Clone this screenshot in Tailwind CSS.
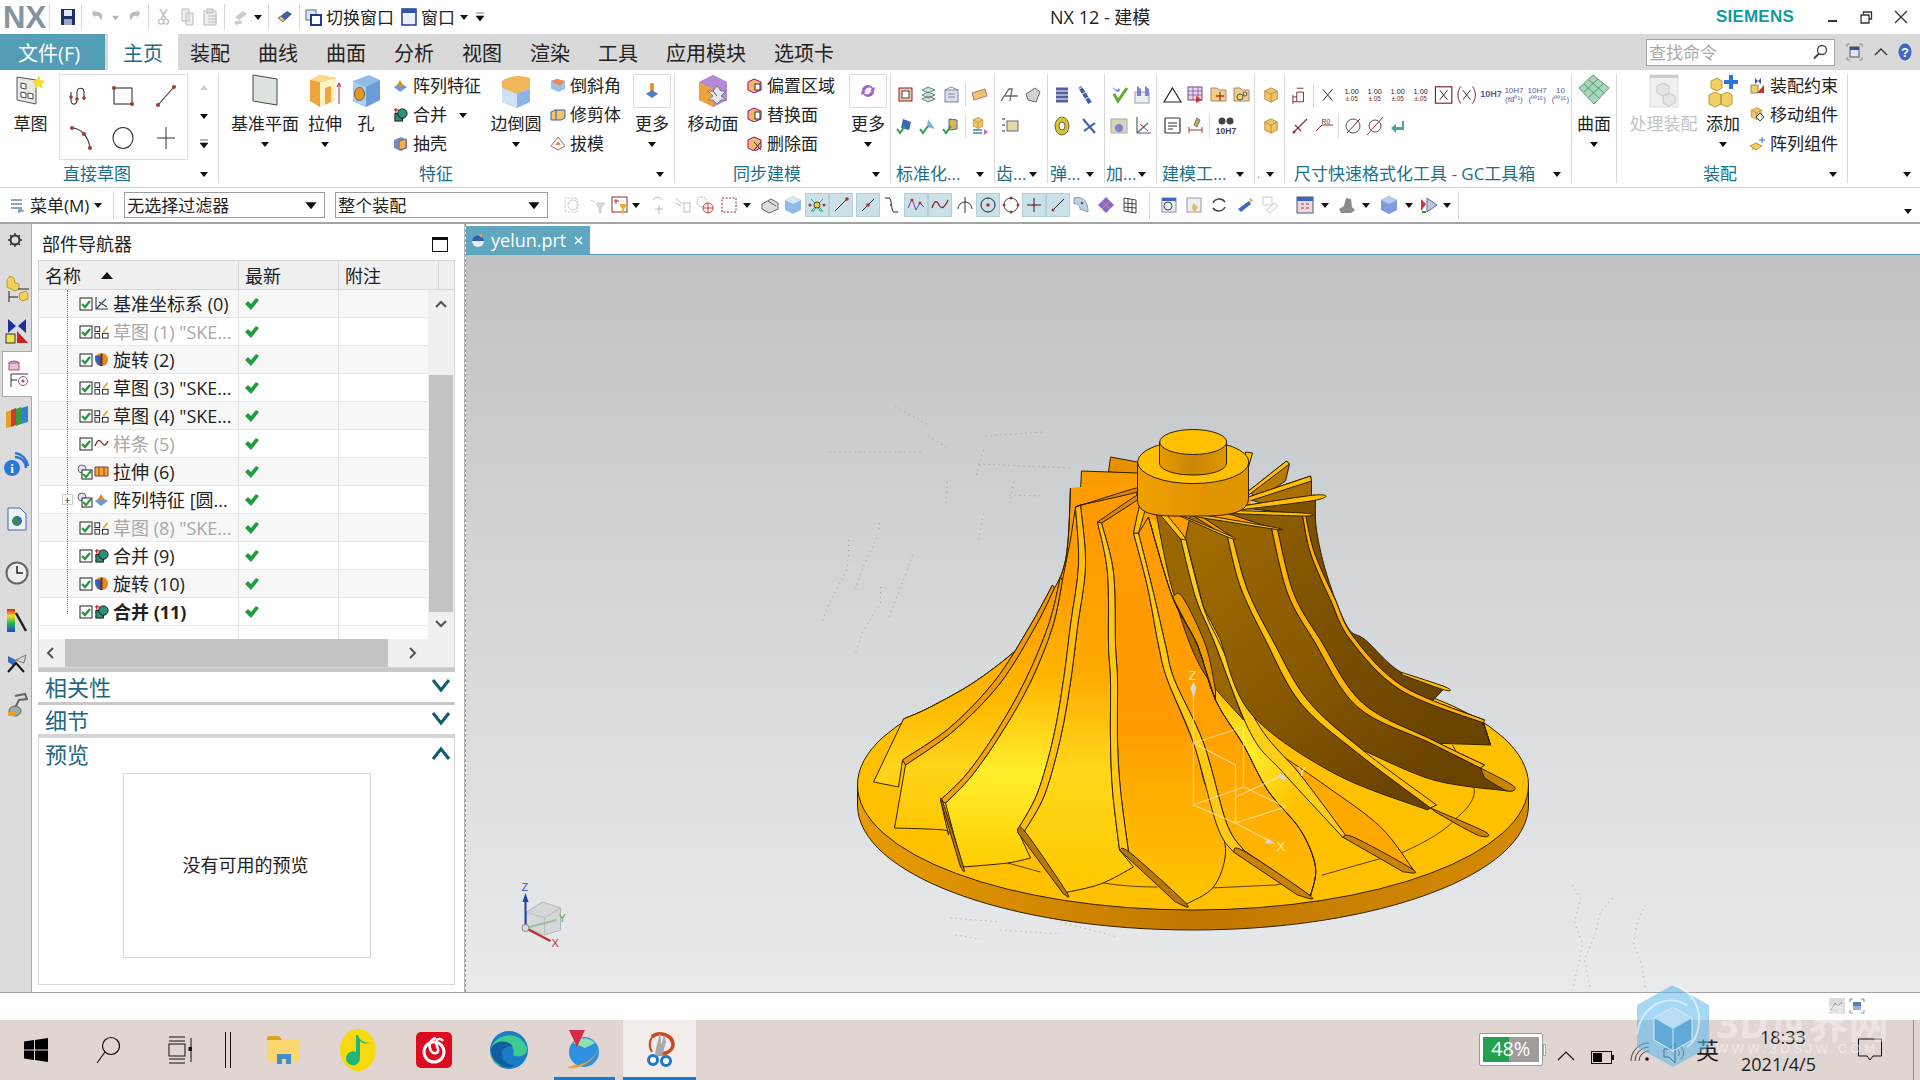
<!DOCTYPE html>
<html lang="zh">
<head>
<meta charset="UTF-8">
<title>NX 12 - 建模</title>
<script src="https://cdn.jsdelivr.net/npm/@tailwindcss/browser@4"></script>
</head>
<body class="bg-white">
<svg class="hidden" width="0" height="0">
  <symbol id="tri" viewBox="0 0 10 10"><path d="M1 3h8L5 8z" fill="#111"/></symbol>
  <symbol id="chk" viewBox="0 0 14 14"><path d="M0 7l3-3 3 3 5-6 3 2-8 10z" fill="#1f9d3a"/></symbol>
  <symbol id="box" viewBox="0 0 14 14"><rect x="1" y="1" width="12" height="12" fill="#fff" stroke="#222"/><path d="M3 7l3 3 5-6" fill="none" stroke="#1f9d3a" stroke-width="2.400"/></symbol>
  <symbol id="boxi" viewBox="0 0 16 16"><circle cx="5" cy="5" r="4" fill="#dfe6f2" stroke="#667"/><rect x="5" y="6" width="10" height="9" fill="#fff" stroke="#222"/><path d="M6 10l3 3 5-6" fill="none" stroke="#1f9d3a" stroke-width="2"/></symbol>
  <symbol id="sk" viewBox="0 0 16 16"><rect x="1" y="3" width="5" height="5" fill="#fff" stroke="#222"/><rect x="1" y="10" width="5" height="5" fill="#fff" stroke="#222"/><rect x="9" y="10" width="6" height="5" fill="#fff" stroke="#222"/><path d="M9 8l5-6 1 2-4 5z" fill="#e8b030"/></symbol>
  <symbol id="rev" viewBox="0 0 16 16"><circle cx="8" cy="8" r="7" fill="#e98a15"/><path d="M1 4h7v11C4 15 1 10 1 4z" fill="#2d63b8"/><path d="M8 2v13" stroke="#7a1e1e" stroke-width="2"/></symbol>
  <symbol id="uni" viewBox="0 0 16 16"><path d="M3 1v5M1 3h5" stroke="#c22" stroke-width="1.300"/><rect x="2" y="7" width="8" height="8" fill="#2f8f7d" stroke="#111"/><circle cx="10" cy="7" r="5" fill="#2f8f7d" stroke="#111"/></symbol>
  <symbol id="cube" viewBox="0 0 20 20"><path d="M10 2l7 3.500v9L10 18l-7-3.500v-9z" fill="#eec46a" stroke="#b08020" stroke-width=".8"/><path d="M10 9v9M3 5.500l7 3.500 7-3.500" fill="none" stroke="#b08020" stroke-width=".8"/></symbol>
  <symbol id="dim" viewBox="0 0 24 20"><text x="12" y="9" font-size="9" text-anchor="middle" fill="#222" font-family="Liberation Sans">1.00</text><text x="12" y="17" font-size="8" text-anchor="middle" fill="#7a1f2a" font-family="Liberation Sans">±.05</text></symbol>
</svg>

<div class="relative w-[1920px] h-[1080px] overflow-hidden flex flex-col text-[#222] font-['Open_Sans','Noto_Sans_CJK_SC',sans-serif]">

  <!-- title bar -->
  <div class="h-[34px] flex items-center bg-white shrink-0">
    <div class="w-[1050px] flex items-center h-full">
      <span class="ml-[3px] w-[42px] text-[31px] font-bold leading-none text-[#84959f] font-['Liberation_Sans',sans-serif]">NX</span>
      <div class="ml-[4px] w-px h-[26px] bg-[#d8d8d8]"></div>
      <svg class="ml-[10px] w-[16px] h-[18px]" viewBox="0 0 16 18"><rect x="1" y="1" width="14" height="16" fill="#1c2f6a"/><rect x="4" y="2" width="8" height="6" fill="#dfe7f4"/><rect x="4" y="11" width="8" height="6" fill="#9aa8c8"/></svg>
      <div class="ml-[5px] w-px h-[26px] bg-[#d8d8d8]"></div>
      <svg class="ml-[8px] w-[14px] h-[16px]" viewBox="0 0 14 16"><path d="M2 4l3-3v2c6-1 9 3 6 9-.5-4-3-6-6-5v2z" fill="#bbb"/></svg>
      <svg class="ml-[7px] w-[9px] h-[9px] opacity-30"><use href="#tri"/></svg>
      <svg class="ml-[8px] w-[14px] h-[16px]" viewBox="0 0 14 16"><path d="M12 4L9 1v2C3 2 0 6 3 12c.5-4 3-6 6-5v2z" fill="#bbb"/></svg>
      <div class="ml-[6px] w-px h-[26px] bg-[#d8d8d8]"></div>
      <svg class="ml-[7px] w-[15px] h-[18px]" viewBox="0 0 15 18"><path d="M11 1L5 11M4 1l6 10M5 11a2.500 2.500 0 1 0 .1 0M10 11a2.500 2.500 0 1 0 .1 0" fill="none" stroke="#c4c4c4" stroke-width="1.500"/></svg>
      <svg class="ml-[9px] w-[15px] h-[18px]" viewBox="0 0 15 18"><path d="M2 1h7v12H2zM6 5h7v12H6z" fill="#eee" stroke="#bbb"/></svg>
      <svg class="ml-[8px] w-[16px] h-[18px]" viewBox="0 0 16 18"><rect x="1" y="3" width="12" height="14" fill="#eee" stroke="#bbb"/><rect x="4" y="1" width="6" height="4" fill="#ddd" stroke="#bbb"/><path d="M5 8h9M5 11h9M5 14h9" stroke="#bbb"/></svg>
      <div class="ml-[5px] w-px h-[26px] bg-[#d8d8d8]"></div>
      <svg class="ml-[8px] w-[15px] h-[18px]" viewBox="0 0 15 18"><path d="M2 9l8-6 4 3-8 6zM1 14l6-2 3 3-7 2z" fill="#ccc"/></svg>
      <svg class="ml-[5px] w-[10px] h-[10px]"><use href="#tri"/></svg>
      <div class="ml-[5px] w-px h-[26px] bg-[#d8d8d8]"></div>
      <svg class="ml-[8px] w-[17px] h-[16px]" viewBox="0 0 17 16"><path d="M1 9l9-7 5 3-9 8z" fill="#3b5fa8"/><path d="M1 9l5 4 2-2-4-4z" fill="#e8c66a" stroke="#555" stroke-width=".6"/></svg>
      <div class="ml-[5px] w-px h-[26px] bg-[#d8d8d8]"></div>
      <svg class="ml-[5px] w-[17px] h-[17px]" viewBox="0 0 17 17"><rect x="1" y="1" width="10" height="10" fill="#dce6f5" stroke="#667"/><rect x="6" y="6" width="10" height="10" fill="#fff" stroke="#1d3c8f" stroke-width="2"/></svg>
      <span class="ml-[4px] text-[17px] leading-none">切换窗口</span>
      <svg class="ml-[7px] w-[16px] h-[18px]" viewBox="0 0 16 18"><rect x="1" y="1" width="14" height="16" fill="#eaf0fb" stroke="#1d3c8f" stroke-width="1.500"/><rect x="1" y="1" width="14" height="4" fill="#2d56b3"/></svg>
      <span class="ml-[4px] text-[17px] leading-none">窗口</span>
      <svg class="ml-[4px] w-[10px] h-[10px]"><use href="#tri"/></svg>
      <svg class="ml-[6px] w-[10px] h-[10px]" viewBox="0 0 10 10"><path d="M1 1h8M1 4h8L5 9z" fill="#111" stroke="#111" stroke-width=".6"/></svg>
    </div>
    <span class="w-[666px] text-[18px] leading-none">NX 12 - 建模</span>
    <span class="w-[111px] text-[17px] font-bold tracking-[.2px] text-[#0f9a9e] font-['Liberation_Sans',sans-serif]">SIEMENS</span>
    <svg class="w-[12px] h-[12px]" viewBox="0 0 12 12"><path d="M1 10h9" stroke="#333" stroke-width="2"/></svg>
    <svg class="ml-[21px] w-[13px] h-[13px]" viewBox="0 0 13 13"><path d="M3.500 3V1h8v7H9.500M1 4h8v8H1z" fill="none" stroke="#333" stroke-width="1.300"/></svg>
    <svg class="ml-[21px] w-[14px] h-[14px]" viewBox="0 0 14 14"><path d="M1 1l12 12M13 1L1 13" stroke="#333" stroke-width="1.300"/></svg>
  </div>

  <!-- ribbon tabs -->
  <div class="h-[36px] flex items-center bg-[#d9d9d9] shrink-0 text-[20px] leading-none">
    <div class="w-[105px] h-full bg-[#549db6] text-white flex items-center pl-[18px] pt-[3px]">文件(F)</div>
    <div class="ml-[3px] w-[70px] h-full bg-white text-[#1b6c87] flex items-center justify-center pt-[3px]">主页</div>
    <div class="ml-[12px] mt-[3px] flex gap-[28px]">
      <span>装配</span><span>曲线</span><span>曲面</span><span>分析</span><span>视图</span><span>渲染</span><span>工具</span><span>应用模块</span><span>选项卡</span>
    </div>
    <div class="ml-auto w-[189px] h-[27px] bg-white border border-[#a5a5a5] flex items-center justify-between pl-[2px] pr-[6px] text-[17px] text-[#a8a8a8]">
      <span>查找命令</span>
      <svg class="w-[16px] h-[16px]" viewBox="0 0 16 16"><circle cx="10" cy="6" r="4.500" fill="#fff" stroke="#444" stroke-width="1.300"/><path d="M7 9.500l-5 5" stroke="#444" stroke-width="2"/></svg>
    </div>
    <svg class="ml-[11px] w-[17px] h-[18px]" viewBox="0 0 17 18"><path d="M1 4V1h3M13 1h3v3M16 14v3h-3M4 17H1v-3" fill="none" stroke="#888"/><rect x="4" y="4" width="9" height="10" fill="#dfe6f2" stroke="#555"/><rect x="4" y="4" width="9" height="3" fill="#2d4f9c"/></svg>
    <svg class="ml-[11px] w-[14px] h-[12px]" viewBox="0 0 14 12"><path d="M1 9l6-6 6 6" fill="none" stroke="#333" stroke-width="1.300"/></svg>
    <svg class="ml-[10px] w-[14px] h-[18px] mr-[8px]" viewBox="0 0 14 18"><ellipse cx="7" cy="9" rx="6.500" ry="8.500" fill="#3f68c4"/><text x="7" y="14" text-anchor="middle" font-size="13" font-weight="700" fill="#fff" font-family="Liberation Sans">?</text></svg>
  </div>

  <!-- ribbon -->
  <div class="h-[118px] py-[4px] flex bg-white shrink-0 text-[17px] leading-none border-b border-[#d4d4d4]">

    <!-- 直接草图 -->
    <div class="w-[219px] border-r border-[#d8d8d8] flex flex-col">
      <div class="h-[86px] flex">
        <div class="w-[59px] flex flex-col items-center pl-[2px]">
          <svg class="w-[32px] h-[32px]" viewBox="0 0 32 32"><path d="M2 3l19 3v24L2 26z" fill="#e8eadf" stroke="#556"/><path d="M6 9l5 1v5l-5-1zM6 18l5 1v5l-5-1zM13 19l5 1v5l-5-1z" fill="#fff" stroke="#445"/><path d="M24 1l1.500 5 5 1-4 3 1 5-4-3-4 3 1-5-4-3 5-1z" fill="#f2e02d"/></svg>
          <span class="mt-[9px]">草图</span>
        </div>
        <div class="w-[129px] h-[86px] border border-[#e0e0e0] grid grid-cols-3 grid-rows-2 place-items-center">
          <svg class="w-[24px] h-[24px]" viewBox="0 0 24 24"><path d="M2 8v8c0 6 6 5 6 0V8c0-5 7-5 7 0v8" fill="none" stroke="#333" stroke-width="1.100"/><circle cx="2" cy="13" r="1.800" fill="#a33"/><circle cx="8" cy="15" r="1.800" fill="#a33"/><circle cx="15" cy="14" r="1.800" fill="#a33"/></svg>
          <svg class="w-[24px] h-[22px]" viewBox="0 0 24 22"><rect x="3" y="3" width="18" height="16" fill="none" stroke="#333" stroke-width="1.100"/><circle cx="3" cy="3" r="2" fill="#a33"/><circle cx="21" cy="19" r="2" fill="#a33"/></svg>
          <svg class="w-[22px] h-[24px]" viewBox="0 0 22 24"><path d="M3 21L19 3" stroke="#333" stroke-width="1.100"/><circle cx="3" cy="21" r="2" fill="#a33"/><circle cx="19" cy="3" r="2" fill="#a33"/></svg>
          <svg class="w-[24px] h-[26px]" viewBox="0 0 24 26"><path d="M3 3c8 0 17 8 18 21" fill="none" stroke="#333" stroke-width="1.100"/><circle cx="3" cy="3" r="2" fill="#a33"/><circle cx="15" cy="9" r="2" fill="#a33"/><circle cx="21" cy="23" r="2" fill="#a33"/></svg>
          <svg class="w-[24px] h-[26px]" viewBox="0 0 24 26"><ellipse cx="12" cy="13" rx="10" ry="10.500" fill="none" stroke="#333" stroke-width="1.100"/></svg>
          <svg class="w-[20px] h-[24px]" viewBox="0 0 20 24"><path d="M10 1v22M1 12h18" stroke="#333" stroke-width="1"/></svg>
        </div>
        <div class="w-[28px] flex flex-col items-center gap-[18px] pt-[9px] pl-[3px]">
          <svg class="w-[10px] h-[10px] rotate-180 opacity-20"><use href="#tri"/></svg>
          <svg class="w-[10px] h-[10px]"><use href="#tri"/></svg>
          <svg class="w-[10px] h-[10px]" viewBox="0 0 10 10"><path d="M1 1h8M1 4h8L5 9z" fill="#111" stroke="#111" stroke-width=".6"/></svg>
        </div>
      </div>
      <div class="mt-[4px] h-[19px] flex items-center justify-between pl-[63px] pr-[9px]"><span class="text-[#1c6f89]">直接草图</span><svg class="w-[10px] h-[10px]"><use href="#tri"/></svg></div>
    </div>

    <!-- 特征 -->
    <div class="w-[456px] border-r border-[#d8d8d8] flex flex-col">
      <div class="h-[86px] flex">
        <div class="ml-[12px] w-[68px] flex flex-col items-center">
          <svg class="w-[26px] h-[32px]" viewBox="0 0 26 32"><path d="M1 1l24 4v26L1 27z" fill="#dbe3dc" stroke="#445"/></svg>
          <span class="mt-[9px]">基准平面</span><svg class="mt-[7px] w-[10px] h-[10px]"><use href="#tri"/></svg>
        </div>
        <div class="ml-[8px] w-[36px] flex flex-col items-center">
          <svg class="w-[32px] h-[34px]" viewBox="0 0 32 34"><path d="M1 6l10-5 16 3v22l-16 7-10-6z" fill="#eda53c"/><path d="M11 8l16-4v22l-5 2V12l-6 2v17l-5 2z" fill="#fff2c6"/><path d="M1 6l10-5 16 3-16 4z" fill="#ffd98a"/><path d="M30 30V10M28 13l2-4 2 4" stroke="#b23" fill="none"/></svg>
          <span class="mt-[7px]">拉伸</span><svg class="mt-[7px] w-[10px] h-[10px]"><use href="#tri"/></svg>
        </div>
        <div class="ml-[11px] w-[24px] flex flex-col items-center">
          <svg class="w-[30px] h-[34px] shrink-0" viewBox="0 0 30 34"><path d="M2 7l16-6 11 5v20l-14 7-13-6z" fill="#8fbbe8"/><path d="M2 7l13 6 14-7v20l-14 7-13-6z" fill="#6d9bd8"/><path d="M2 7l13 6v20L2 27z" fill="#aacdf0"/><ellipse cx="8.500" cy="20" rx="5" ry="6.500" fill="#e7961a" stroke="#664"/></svg>
          <span class="mt-[7px]">孔</span>
        </div>
        <div class="ml-[15px] w-[92px] -mt-[3px]">
          <div class="h-[29px] flex items-center gap-[5px]"><svg class="w-[15px] h-[15px]" viewBox="0 0 15 15"><path d="M1 9l6-4 7 4-7 5z" fill="#6d9bd8"/><path d="M4 7l3-5 3 5-3 2z" fill="#e98a15"/></svg>阵列特征</div>
          <div class="h-[29px] flex items-center gap-[5px]"><svg class="w-[15px] h-[15px]"><use href="#uni"/></svg>合并<svg class="ml-[6px] w-[10px] h-[10px]"><use href="#tri"/></svg></div>
          <div class="h-[29px] flex items-center gap-[5px]"><svg class="w-[15px] h-[15px]" viewBox="0 0 15 15"><path d="M1 4l7-3 6 3v8l-6 3-7-3z" fill="#6d8fc8"/><path d="M6 5l7-2v9l-7 2z" fill="#f0b04a" stroke="#955"/></svg>抽壳</div>
        </div>
        <div class="ml-[5px] w-[52px] flex flex-col items-center">
          <svg class="w-[32px] h-[34px]" viewBox="0 0 32 34"><path d="M2 7c8-6 20-6 28-3v10L17 20 2 14z" fill="#f2b65a"/><path d="M2 14l15 6 13-6v14l-13 6-15-6z" fill="#8ab3e6"/><path d="M2 14l15 6v14L2 28z" fill="#cfe1f6"/></svg>
          <span class="mt-[7px]">边倒圆</span><svg class="mt-[7px] w-[10px] h-[10px]"><use href="#tri"/></svg>
        </div>
        <div class="ml-[8px] w-[75px] -mt-[3px]">
          <div class="h-[29px] flex items-center gap-[4px]"><svg class="w-[16px] h-[15px]" viewBox="0 0 16 15"><path d="M1 3l6-2 8 2v8l-6 3-8-3z" fill="#9cc0ec"/><path d="M1 3l6-2 8 2-5 5z" fill="#e98a5a"/></svg>倒斜角</div>
          <div class="h-[29px] flex items-center gap-[4px]"><svg class="w-[16px] h-[15px]" viewBox="0 0 16 15"><path d="M1 5l4-2h10v8l-4 2H1z" fill="#f0c36c" stroke="#3a5fa8"/><path d="M6 3v10" stroke="#3a5fa8"/></svg>修剪体</div>
          <div class="h-[29px] flex items-center gap-[4px]"><svg class="w-[16px] h-[15px]" viewBox="0 0 16 15"><path d="M8 1l7 9-7 4-7-4z" fill="#fff" stroke="#a66"/><path d="M8 5l3 4H5z" fill="#e98a5a"/></svg>拔模</div>
        </div>
        <div class="ml-[8px] w-[38px] flex flex-col items-center">
          <div class="w-[38px] h-[34px] border border-[#dcdcdc] rounded-[2px] flex items-center justify-center"><svg class="w-[14px] h-[18px]" viewBox="0 0 16 20"><rect x="6" y="1" width="4" height="9" fill="#e98a15"/><path d="M1 13l7-4 7 4-7 5z" fill="#4f7fc0"/></svg></div>
          <span class="mt-[7px]">更多</span><svg class="mt-[7px] w-[10px] h-[10px]"><use href="#tri"/></svg>
        </div>
      </div>
      <div class="mt-[4px] h-[19px] flex items-center justify-between pr-[9px]"><span class="ml-[200px] text-[#1c6f89]">特征</span><svg class="w-[10px] h-[10px]"><use href="#tri"/></svg></div>
    </div>

    <!-- 同步建模 -->
    <div class="w-[216px] border-r border-[#d8d8d8] flex flex-col">
      <div class="h-[86px] flex">
        <div class="ml-[13px] w-[50px] flex flex-col items-center">
          <svg class="w-[32px] h-[34px]" viewBox="0 0 32 34"><path d="M16 1l14 7v18l-14 7-14-7V8z" fill="#e9a33a"/><path d="M2 8l14-7 14 7-14 7z" fill="#b488d8"/><path d="M30 8v18l-14 7V15z" fill="#b488d8"/><path d="M20 22l-4-5 4-5 4 5h5l-5 5 5 4h-5l-4 4-4-4h-5l5-4-5-5h5z" fill="#e4e8ec" stroke="#667" stroke-width=".8"/></svg>
          <span class="mt-[7px] whitespace-nowrap">移动面</span>
        </div>
        <div class="ml-[9px] w-[90px] -mt-[3px]">
          <div class="h-[29px] flex items-center gap-[5px]"><svg class="w-[15px] h-[15px]" viewBox="0 0 15 15"><path d="M1 4l6-3 7 3v8l-7 3-6-3z" fill="#edbb6a" stroke="#a08"/><rect x="8" y="6" width="5" height="6" fill="#fff" stroke="#333"/></svg>偏置区域</div>
          <div class="h-[29px] flex items-center gap-[5px]"><svg class="w-[15px] h-[15px]" viewBox="0 0 15 15"><path d="M1 4l6-3 7 3v8l-7 3-6-3z" fill="#edbb6a" stroke="#a08"/><rect x="8" y="5" width="5" height="7" fill="#fff" stroke="#333"/></svg>替换面</div>
          <div class="h-[29px] flex items-center gap-[5px]"><svg class="w-[15px] h-[15px]" viewBox="0 0 15 15"><path d="M1 4l6-3 7 3v8l-7 3-6-3z" fill="#edbb6a" stroke="#a08"/><path d="M7 6l7 8M14 6l-7 8" stroke="#333"/></svg>删除面</div>
        </div>
        <div class="ml-[12px] w-[38px] flex flex-col items-center">
          <div class="w-[38px] h-[34px] border border-[#dcdcdc] rounded-[2px] flex items-center justify-center"><svg class="w-[16px] h-[16px]" viewBox="0 0 16 16"><path d="M2 7a6 6 0 0 1 11-2l2-1-1 5-4-2 2-1a4 4 0 0 0-7 2zM14 9a6 6 0 0 1-11 2l-2 1 1-5 4 2-2 1a4 4 0 0 0 7-2z" fill="#a560c8"/></svg></div>
          <span class="mt-[7px]">更多</span><svg class="mt-[7px] w-[10px] h-[10px]"><use href="#tri"/></svg>
        </div>
      </div>
      <div class="mt-[4px] h-[19px] flex items-center justify-between pr-[9px]"><span class="ml-[58px] text-[#1c6f89]">同步建模</span><svg class="w-[10px] h-[10px]"><use href="#tri"/></svg></div>
    </div>

    <!-- 标准化 -->
    <div class="w-[104px] border-r border-[#d8d8d8] flex flex-col">
      <div class="h-[86px] pt-[5px] pl-[5px]">
        <div class="h-[31px] flex items-center gap-[4px]">
          <svg class="w-[19px] h-[19px]" viewBox="0 0 19 19"><rect x="3" y="3" width="13" height="13" fill="#f0c7b0" stroke="#822"/><rect x="6" y="6" width="7" height="7" fill="#fff" stroke="#444"/></svg>
          <svg class="w-[19px] h-[19px]" viewBox="0 0 19 19"><path d="M3 5l6-3 7 3-7 3zM3 10l6-3 7 3-7 3zM3 14l6-3 7 3-7 3z" fill="#cdd" stroke="#687"/></svg>
          <svg class="w-[19px] h-[19px]" viewBox="0 0 19 19"><rect x="3" y="5" width="13" height="12" fill="#dde" stroke="#789"/><path d="M3 5l6-3 7 3M6 9h7M6 12h7" stroke="#789" fill="none"/></svg>
          <div class="w-px h-[24px] bg-[#d8d8d8]"></div>
          <svg class="ml-[1px] w-[17px] h-[17px]" viewBox="0 0 17 17"><path d="M1 7l13-4 2 7-13 4z" fill="#eec56a" stroke="#a78"/></svg>
        </div>
        <div class="h-[31px] flex items-center gap-[4px]">
          <svg class="w-[19px] h-[19px]" viewBox="0 0 19 19"><path d="M7 3l8 3-2 8-8-2z" fill="#3c67c0"/><path d="M1 13l3 4 5-7" fill="none" stroke="#2aa050" stroke-width="2"/></svg>
          <svg class="w-[19px] h-[19px]" viewBox="0 0 19 19"><path d="M9 3l7 10-8-2z" fill="#7fb0d8"/><path d="M1 13l3 4 5-7" fill="none" stroke="#2aa050" stroke-width="2"/></svg>
          <svg class="w-[19px] h-[19px]" viewBox="0 0 19 19"><path d="M7 3l8 1v9l-8 1z" fill="#e4b64a" stroke="#3c67c0"/><path d="M1 13l3 4 5-7" fill="none" stroke="#2aa050" stroke-width="2"/></svg>
          <div class="w-px h-[24px] bg-[#d8d8d8]"></div>
          <svg class="ml-[1px] w-[17px] h-[19px]" viewBox="0 0 17 19"><use href="#cube" width="14" height="14"/><path d="M2 14h9M2 17h9" stroke="#48a" stroke-width="1.500"/><path d="M13 13l4 3-4 3z" fill="#b36fd0"/></svg>
        </div>
      </div>
      <div class="mt-[4px] h-[19px] flex items-center justify-between pl-[5px] pr-[9px]"><span class="text-[#1c6f89]">标准化...</span><svg class="w-[10px] h-[10px]"><use href="#tri"/></svg></div>
    </div>

    <!-- 齿 -->
    <div class="w-[53px] border-r border-[#d8d8d8] flex flex-col">
      <div class="h-[86px] pt-[5px] pl-[5px]">
        <div class="h-[31px] flex items-center gap-[4px]">
          <svg class="w-[19px] h-[16px]" viewBox="0 0 19 16"><path d="M1 14L9 2h3l-2 12M5 9h13" fill="none" stroke="#667" stroke-width="1.300"/></svg>
          <svg class="w-[19px] h-[18px]" viewBox="0 0 19 18"><path d="M3 8l9-6 5 4-4 10-8-2z" fill="#cfd4cc" stroke="#667"/></svg>
        </div>
        <div class="h-[31px] flex items-center"><svg class="ml-[1px] w-[19px] h-[17px]" viewBox="0 0 19 17"><path d="M1 2h3M1 8h3M1 14h3" stroke="#222"/><rect x="6" y="4" width="11" height="10" fill="#e8d8a8" stroke="#667"/></svg></div>
      </div>
      <div class="mt-[4px] h-[19px] flex items-center justify-between pl-[1px] pr-[9px]"><span class="text-[#1c6f89]">齿...</span><svg class="w-[10px] h-[10px]"><use href="#tri"/></svg></div>
    </div>

    <!-- 弹 -->
    <div class="w-[57px] border-r border-[#d8d8d8] flex flex-col">
      <div class="h-[86px] pt-[5px] pl-[5px]">
        <div class="h-[31px] flex items-center gap-[6px]">
          <svg class="w-[18px] h-[18px]" viewBox="0 0 18 18"><path d="M3 3h12M3 7h12M3 11h12M3 15h12" stroke="#51609a" stroke-width="3"/></svg>
          <svg class="w-[16px] h-[20px]" viewBox="0 0 16 20"><path d="M3 2l10 16" stroke="#3a5fb0" stroke-width="4"/><path d="M2 4l4-2M5 9l4-2M8 14l4-2" stroke="#e8eef8"/></svg>
        </div>
        <div class="h-[31px] flex items-center gap-[10px]">
          <svg class="w-[18px] h-[20px]" viewBox="0 0 18 20"><ellipse cx="9" cy="10" rx="7" ry="9" fill="#d9c22f" stroke="#665"/><ellipse cx="9" cy="10" rx="3" ry="4" fill="#fff" stroke="#665"/></svg>
          <svg class="w-[16px] h-[18px]" viewBox="0 0 16 18"><path d="M2 2l12 14M14 6L3 14" stroke="#3a5fb0" stroke-width="2"/></svg>
        </div>
      </div>
      <div class="mt-[4px] h-[19px] flex items-center justify-between pl-[2px] pr-[9px]"><span class="text-[#1c6f89]">弹...</span><svg class="w-[10px] h-[10px]"><use href="#tri"/></svg></div>
    </div>

    <!-- 加 -->
    <div class="w-[52px] border-r border-[#d8d8d8] flex flex-col">
      <div class="h-[86px] pt-[5px] pl-[5px]">
        <div class="h-[31px] flex items-center gap-[4px]">
          <svg class="w-[19px] h-[19px]" viewBox="0 0 19 19"><path d="M2 2l5 3 2-2 1 3-3 1z" fill="#7a86c8"/><path d="M4 9l4 7 9-13" fill="none" stroke="#5ab02c" stroke-width="3"/></svg>
          <svg class="w-[19px] h-[19px]" viewBox="0 0 19 19"><rect x="2" y="7" width="14" height="11" fill="#e8eef2" stroke="#99a"/><path d="M4 1l4 3v7H4zM12 1l4 3v7h-4z" fill="#7a86c8"/></svg>
        </div>
        <div class="h-[31px] flex items-center gap-[4px]">
          <svg class="w-[19px] h-[19px]" viewBox="0 0 19 19"><rect x="1" y="3" width="16" height="14" fill="#d9d4bc" stroke="#aaa"/><circle cx="9" cy="12" r="4" fill="#7a86c8"/></svg>
          <svg class="w-[19px] h-[19px]" viewBox="0 0 19 19"><path d="M4 1v16h14M4 17L15 7" fill="none" stroke="#567" stroke-width="1.200"/><path d="M7 8l8 7" stroke="#a33"/></svg>
        </div>
      </div>
      <div class="mt-[4px] h-[19px] flex items-center justify-between pl-[1px] pr-[9px]"><span class="text-[#1c6f89]">加...</span><svg class="w-[10px] h-[10px]"><use href="#tri"/></svg></div>
    </div>

    <!-- 建模工具 -->
    <div class="w-[98px] border-r border-[#d8d8d8] flex flex-col">
      <div class="h-[86px] pt-[5px] pl-[6px]">
        <div class="h-[31px] flex items-center gap-[4px]">
          <svg class="w-[19px] h-[18px]" viewBox="0 0 19 18"><path d="M9.500 2L18 16H1z" fill="none" stroke="#222" stroke-width="1.200"/></svg>
          <svg class="w-[19px] h-[19px]" viewBox="0 0 19 19"><rect x="2" y="2" width="14" height="13" fill="#ecd4e0" stroke="#6b4a9c"/><path d="M2 6h14M2 10h14M7 2v13M12 2v13" stroke="#6b4a9c" stroke-width=".7"/><path d="M10 11l6 4-6 3z" fill="#c33"/></svg>
          <svg class="w-[19px] h-[19px]" viewBox="0 0 19 19"><path d="M2 3h6l2 2h7v11H2z" fill="#f0d080" stroke="#a87"/><path d="M11 7v9M7 11h8" stroke="#a33" stroke-width="1.300"/></svg>
          <svg class="w-[19px] h-[19px]" viewBox="0 0 19 19"><path d="M2 3h6l2 2h7v11H2z" fill="#f0d080" stroke="#a87"/><circle cx="8" cy="12" r="3" fill="none" stroke="#555"/><circle cx="13" cy="9" r="2" fill="none" stroke="#555"/></svg>
        </div>
        <div class="h-[31px] flex items-center gap-[4px]">
          <svg class="w-[19px] h-[19px]" viewBox="0 0 19 19"><rect x="2" y="2" width="15" height="15" rx="1" fill="#fff" stroke="#333" stroke-width="1.200"/><path d="M5 7h9M5 10h9M5 13h5" stroke="#333"/></svg>
          <svg class="w-[19px] h-[19px]" viewBox="0 0 19 19"><path d="M3 14h13M3 11v6M16 11v6" stroke="#a33"/><path d="M11 2l3 2-3 7-3-2z" fill="#c9a850" stroke="#777"/></svg>
          <div class="w-px h-[24px] bg-[#d8d8d8]"></div>
          <svg class="w-[24px] h-[20px]" viewBox="0 0 24 20"><circle cx="8" cy="5" r="3.500" fill="#444"/><circle cx="16" cy="5" r="3.500" fill="#444"/><text x="12" y="18" font-size="8.500" font-weight="700" text-anchor="middle" fill="#445" font-family="Liberation Sans">10H7</text></svg>
        </div>
      </div>
      <div class="mt-[4px] h-[19px] flex items-center justify-between pl-[5px] pr-[9px]"><span class="text-[#1c6f89]">建模工...</span><svg class="w-[10px] h-[10px]"><use href="#tri"/></svg></div>
    </div>

    <!-- . -->
    <div class="w-[30px] border-r border-[#d8d8d8] flex flex-col">
      <div class="h-[86px] pt-[5px] pl-[7px]">
        <div class="h-[31px] flex items-center"><svg class="w-[18px] h-[18px]"><use href="#cube"/></svg></div>
        <div class="h-[31px] flex items-center"><svg class="w-[18px] h-[18px]"><use href="#cube"/></svg></div>
      </div>
      <div class="mt-[4px] h-[19px] flex items-center justify-between pl-[2px] pr-[9px]"><span class="text-[#1c6f89] text-[10px]">.</span><svg class="w-[10px] h-[10px]"><use href="#tri"/></svg></div>
    </div>

    <!-- 尺寸快速格式化工具 -->
    <div class="w-[287px] border-r border-[#d8d8d8] flex flex-col">
      <div class="h-[86px] pt-[5px] pl-[5px]">
        <div class="h-[31px] flex items-center gap-[1px] text-[#51609a]">
          <svg class="w-[20px] h-[20px]" viewBox="0 0 20 20"><path d="M7 7h7v10H7zM3 12h4M3 17h4M7 3h7M3 10v9" fill="none" stroke="#8a2a33"/></svg>
          <div class="mx-[3px] w-px h-[24px] bg-[#d8d8d8]"></div>
          <svg class="w-[20px] h-[20px]" viewBox="0 0 20 20"><path d="M5 4l10 12M15 4L5 16" stroke="#333"/></svg>
          <svg class="ml-[3px] w-[20px] h-[20px]"><use href="#dim"/></svg>
          <svg class="ml-[3px] w-[20px] h-[20px]"><use href="#dim"/></svg>
          <svg class="ml-[3px] w-[20px] h-[20px]"><use href="#dim"/></svg>
          <svg class="ml-[3px] w-[20px] h-[20px]"><use href="#dim"/></svg>
          <svg class="ml-[2px] w-[20px] h-[20px]" viewBox="0 0 20 20"><rect x="1.500" y="1.500" width="17" height="17" fill="none" stroke="#7a2030" stroke-width="1.200"/><path d="M6 5l8 10M14 5L6 15" stroke="#333"/></svg>
          <svg class="ml-[3px] w-[20px] h-[20px]" viewBox="0 0 20 20"><path d="M4 1C0 6 0 14 4 19M16 1c4 5 4 13 0 18" fill="none" stroke="#7a2030"/><path d="M6 5l8 10M14 5L6 15" stroke="#333"/></svg>
          <span class="ml-[3px] w-[21px] text-[9px] font-bold text-center font-['Liberation_Sans',sans-serif]">10H7</span>
          <span class="ml-[1px] w-[22px] text-[8px] text-center leading-[9px] font-['Liberation_Sans',sans-serif]">10H7<br>(f8⁰¹)</span>
          <span class="ml-[1px] w-[22px] text-[8px] text-center leading-[9px] font-['Liberation_Sans',sans-serif]">10H7<br>(⁰⁰¹⁵)</span>
          <span class="ml-[1px] w-[22px] text-[8px] text-center leading-[9px] font-['Liberation_Sans',sans-serif]">10<br>(⁰⁰¹⁵)</span>
        </div>
        <div class="h-[31px] flex items-center">
          <svg class="w-[20px] h-[20px]" viewBox="0 0 20 20"><path d="M3 17L17 3M5 9l6 6" stroke="#8a2a33" stroke-width="1.200"/><circle cx="4" cy="16" r="1.500" fill="#a33"/></svg>
          <svg class="ml-[4px] w-[20px] h-[20px]" viewBox="0 0 20 20"><path d="M2 15L8 9h11" fill="none" stroke="#8a2a33"/><text x="12" y="8" font-size="7" text-anchor="middle" fill="#8a2a33" font-family="Liberation Sans">R0</text></svg>
          <div class="mx-[4px] w-px h-[24px] bg-[#d8d8d8]"></div>
          <svg class="w-[20px] h-[20px]" viewBox="0 0 20 20"><circle cx="10" cy="10" r="7" fill="none" stroke="#555"/><path d="M4 17L17 3" stroke="#7a2030"/></svg>
          <svg class="ml-[2px] w-[20px] h-[20px]" viewBox="0 0 20 20"><circle cx="10" cy="10" r="6" fill="none" stroke="#555"/><path d="M2 19L18 1" stroke="#a33"/></svg>
          <svg class="ml-[3px] w-[18px] h-[16px]" viewBox="0 0 18 16"><path d="M14 3v6H8V6L3 10l5 5v-3h8V3z" fill="#4aa5a5"/></svg>
        </div>
      </div>
      <div class="mt-[4px] h-[19px] flex items-center justify-between pl-[9px] pr-[9px]"><span class="text-[#1c6f89]">尺寸快速格式化工具 - GC工具箱</span><svg class="w-[10px] h-[10px]"><use href="#tri"/></svg></div>
    </div>

    <!-- 曲面 -->
    <div class="w-[45px] border-r border-[#d8d8d8] flex flex-col items-center">
      <svg class="w-[32px] h-[32px]" viewBox="0 0 32 32"><path d="M1 14L15 1l16 13-15 16z" fill="#a9d6b8" stroke="#5a9a78"/><path d="M6 10l15 14M11 6l15 13M6 18L20 5M11 23L25 10" stroke="#3d8a60" stroke-width=".8"/></svg>
      <span class="mt-[9px]">曲面</span><svg class="mt-[7px] w-[10px] h-[10px]"><use href="#tri"/></svg>
    </div>

    <!-- 装配 -->
    <div class="w-[231px] border-r border-[#d8d8d8] flex flex-col">
      <div class="h-[86px] flex">
        <div class="ml-[12px] w-[69px] flex flex-col items-center text-[#c4c4c4]">
          <svg class="w-[30px] h-[34px]" viewBox="0 0 30 34"><rect x="1" y="1" width="28" height="32" fill="#f0f0f0" stroke="#ddd"/><path d="M1 1h28v3H1z" fill="#ccc"/><path d="M8 12l6-3 6 3v7l-6 3-6-3zM14 22l6-3 6 3v7l-6 3-6-3z" fill="#e4e4e4" stroke="#c8c8c8"/></svg>
          <span class="mt-[7px]">处理装配</span>
        </div>
        <div class="ml-[8px] w-[34px] flex flex-col items-center">
          <svg class="w-[32px] h-[36px] shrink-0" viewBox="0 0 32 36"><path d="M4 7l6-3 5 3v7l-5 3-6-3zM2 21l6-3 6 3v9l-6 3-6-3zM14 21l6-3 5 3v9l-5 3-6-3z" fill="#f1cf68" stroke="#b89a30"/><path d="M24 1v14M17 8h14" stroke="#2c74d9" stroke-width="4"/></svg>
          <span class="mt-[5px]">添加</span><svg class="mt-[7px] w-[10px] h-[10px]"><use href="#tri"/></svg>
        </div>
        <div class="ml-[9px] w-[90px] -mt-[3px]">
          <div class="h-[29px] flex items-center gap-[5px]"><svg class="w-[16px] h-[17px]" viewBox="0 0 16 17"><path d="M2 8h7v8H2z" fill="#f1cf68" stroke="#886"/><path d="M8 16l7-8v8z" fill="#c83030"/><path d="M6 1l3 3 3-3v6L9 4 6 7z" fill="#3c4fa8"/></svg>装配约束</div>
          <div class="h-[29px] flex items-center gap-[5px]"><svg class="w-[16px] h-[17px]" viewBox="0 0 16 17"><use href="#cube" width="15" height="15"/><path d="M11 7l4 4-4 4-4-4z" fill="#eee" stroke="#333"/></svg>移动组件</div>
          <div class="h-[29px] flex items-center gap-[5px]"><svg class="w-[16px] h-[17px]" viewBox="0 0 16 17"><path d="M1 11l6-3 6 3-6 4zM4 12v3" fill="#f1cf68" stroke="#b89a30"/><path d="M13 2v6M10 5h6" stroke="#2c74d9"/></svg>阵列组件</div>
        </div>
      </div>
      <div class="mt-[4px] h-[19px] flex items-center justify-between pr-[9px]"><span class="ml-[86px] text-[#1c6f89]">装配</span><svg class="w-[10px] h-[10px]"><use href="#tri"/></svg></div>
    </div>
    <div class="flex-1 flex flex-col justify-end items-end pr-[8px] pb-[4px]"><svg class="w-[10px] h-[10px]"><use href="#tri"/></svg></div>
  </div>

  <!-- selection bar -->
  <div class="h-[36px] flex items-center bg-white shrink-0 border-b-2 border-[#a3a3a3] text-[17px] leading-none">
    <svg class="ml-[10px] w-[16px] h-[16px]" viewBox="0 0 16 16"><path d="M1 3h11M1 7h11M1 11h11" stroke="#6a88a8" stroke-width="1.500"/><path d="M8 10l7 4-7 2z" fill="#8aa"/></svg>
    <span class="ml-[4px]">菜单(M)</span>
    <svg class="ml-[4px] w-[10px] h-[10px]"><use href="#tri"/></svg>
    <div class="ml-[10px] w-px h-[28px] bg-[#d8d8d8]"></div>
    <div class="ml-[10px] w-[201px] h-[26px] border border-[#9d9d9d] flex items-center justify-between pl-[2px] pr-[6px]">无选择过滤器<svg class="w-[14px] h-[14px]"><use href="#tri"/></svg></div>
    <div class="ml-[10px] w-[213px] h-[26px] border border-[#9d9d9d] flex items-center justify-between pl-[2px] pr-[6px]">整个装配<svg class="w-[14px] h-[14px]"><use href="#tri"/></svg></div>
    <div class="ml-[8px] flex items-center h-[24px]">
      <svg class="w-[20px] h-[20px] ml-[5px]" viewBox="0 0 20 20"><path d="M4 3h12v14H4z" fill="none" stroke="#ccc" stroke-dasharray="2 1"/><circle cx="12" cy="10" r="5" fill="none" stroke="#ccc"/></svg>
      <svg class="w-[20px] h-[20px] ml-[6px]" viewBox="0 0 20 20"><path d="M3 5l5 2M9 8h9l-4 5v5l-2-1v-4z" fill="#ddd" stroke="#ccc"/></svg>
      <svg class="w-[20px] h-[20px] ml-[3px]" viewBox="0 0 20 20"><rect x="2" y="2" width="15" height="15" fill="#fff" stroke="#8a2a33"/><path d="M9 9h9l-4 5v5l-2-1v-4z" fill="#e8b030"/><path d="M6 4v5M4 6h5" stroke="#a33"/></svg>
      <svg class="w-[10px] h-[10px] ml-[1px]"><use href="#tri"/></svg>
      <svg class="w-[20px] h-[20px] ml-[8px]" viewBox="0 0 20 20"><path d="M4 5a5 5 0 0 1 9 0" fill="none" stroke="#bbb"/><path d="M10 10v9M6 14h8" stroke="#bbb"/></svg>
      <svg class="w-[20px] h-[20px] ml-[4px]" viewBox="0 0 20 20"><path d="M3 3l6 6M3 8l5 3" stroke="#bbb"/><rect x="11" y="8" width="6" height="9" fill="none" stroke="#bbb"/></svg>
      <svg class="w-[20px] h-[20px] ml-[2px]" viewBox="0 0 20 20"><circle cx="7" cy="7" r="5" fill="none" stroke="#aaa" stroke-dasharray="1.500 1"/><circle cx="13" cy="13" r="5" fill="none" stroke="#c44"/><path d="M13 8v10M8 13h10" stroke="#c44"/></svg>
      <svg class="w-[20px] h-[20px] ml-[4px]" viewBox="0 0 20 20"><rect x="3" y="3" width="14" height="14" fill="none" stroke="#8a2a33" stroke-dasharray="2 1.500"/></svg>
      <svg class="w-[10px] h-[10px] ml-[3px]"><use href="#tri"/></svg>
      <svg class="w-[20px] h-[20px] ml-[8px]" viewBox="0 0 20 20"><path d="M2 9l9-5 7 4v6l-9 4-7-4z" fill="#ddd" stroke="#666"/><path d="M8 6l8 5" stroke="#666"/></svg>
      <svg class="w-[20px] h-[20px] ml-[3px]" viewBox="0 0 20 20"><path d="M10 1l8 4v10l-8 4-8-4V5z" fill="#8fbbe8"/><path d="M2 5l8 4 8-4-8-4z" fill="#d8e8f8"/></svg>
      <div class="ml-[2px] w-[24px] h-[24px] bg-[#c9e1e7] border border-[#b2d0d8] flex items-center justify-center"><svg class="w-[18px] h-[18px]" viewBox="0 0 18 18"><path d="M3 3l6 6-6 6h3l3-6 3 6h3L9 9l6-6" fill="none" stroke="#3a7"/><circle cx="9" cy="9" r="3" fill="#e8d02a" stroke="#444"/><circle cx="2" cy="9" r="1.500" fill="#a33"/><circle cx="16" cy="9" r="1.500" fill="#a33"/></svg></div>
      <div class="w-[24px] h-[24px] bg-[#c9e1e7] border border-[#b2d0d8] flex items-center justify-center"><svg class="w-[18px] h-[18px]" viewBox="0 0 18 18"><path d="M3 15L15 3" stroke="#222"/><circle cx="15" cy="3" r="1.800" fill="#a33"/></svg></div>
      <div class="ml-[3px] w-[24px] h-[24px] bg-[#c9e1e7] border border-[#b2d0d8] flex items-center justify-center"><svg class="w-[18px] h-[18px]" viewBox="0 0 18 18"><path d="M3 15L15 3" stroke="#222"/><circle cx="9" cy="9" r="1.800" fill="#a33"/></svg></div>
      <svg class="w-[20px] h-[20px] ml-[1px]" viewBox="0 0 20 20"><path d="M4 3h4c3 0 2 14 5 14h4" fill="none" stroke="#222"/><circle cx="10" cy="10" r="1" fill="#a33"/></svg>
      <div class="ml-[3px] w-[24px] h-[24px] bg-[#c9e1e7] border border-[#b2d0d8] flex items-center justify-center"><svg class="w-[18px] h-[18px]" viewBox="0 0 18 18"><path d="M1 12L5 3l4 11 4-7 4 4" fill="none" stroke="#7a3fb0"/><circle cx="5" cy="4" r="1.500" fill="#a33"/><circle cx="13" cy="7" r="1.500" fill="#a33"/></svg></div>
      <div class="w-[24px] h-[24px] bg-[#c9e1e7] border border-[#b2d0d8] flex items-center justify-center"><svg class="w-[18px] h-[18px]" viewBox="0 0 18 18"><path d="M1 12c3-9 5-7 7-3s5 4 9-5" fill="none" stroke="#822" stroke-width="1.300"/></svg></div>
      <svg class="w-[20px] h-[20px] ml-[3px]" viewBox="0 0 20 20"><path d="M10 2v16M3 14a7 7 0 0 1 14 0" fill="none" stroke="#333"/><circle cx="10" cy="7" r="1" fill="#a33"/></svg>
      <div class="ml-[1px] w-[24px] h-[24px] bg-[#c9e1e7] border border-[#b2d0d8] flex items-center justify-center"><svg class="w-[18px] h-[18px]" viewBox="0 0 18 18"><circle cx="9" cy="9" r="7" fill="none" stroke="#222"/><circle cx="9" cy="9" r="1.800" fill="#a33"/></svg></div>
      <svg class="w-[20px] h-[20px] ml-[1px]" viewBox="0 0 20 20"><circle cx="10" cy="10" r="7" fill="none" stroke="#444"/><circle cx="10" cy="3" r="1.500" fill="#a33"/><circle cx="10" cy="17" r="1.500" fill="#a33"/><circle cx="3" cy="10" r="1.500" fill="#a33"/><circle cx="17" cy="10" r="1.500" fill="#a33"/></svg>
      <div class="ml-[1px] w-[24px] h-[24px] bg-[#c9e1e7] border border-[#b2d0d8] flex items-center justify-center"><svg class="w-[18px] h-[18px]" viewBox="0 0 18 18"><path d="M9 2v14M2 9h14" stroke="#222"/><circle cx="9" cy="9" r="1.500" fill="#a33"/></svg></div>
      <div class="w-[24px] h-[24px] bg-[#c9e1e7] border border-[#b2d0d8] flex items-center justify-center"><svg class="w-[18px] h-[18px]" viewBox="0 0 18 18"><path d="M3 15L15 3" stroke="#222"/><circle cx="4" cy="14" r="1.500" fill="#a33"/></svg></div>
      <svg class="w-[20px] h-[20px] ml-[1px]" viewBox="0 0 20 20"><path d="M3 3c9-2 14 3 14 14L9 14C9 10 6 8 3 9z" fill="#b8d4ec" stroke="#89a"/><circle cx="11" cy="8" r="1.200" fill="#a33"/></svg>
      <svg class="w-[20px] h-[20px] ml-[5px]" viewBox="0 0 20 20"><path d="M10 2l8 8-8 8-8-8z" fill="#8a6ac8"/><path d="M6 6l8 8M14 6l-8 8" stroke="#d88"/></svg>
      <svg class="w-[20px] h-[20px] ml-[4px]" viewBox="0 0 20 20"><path d="M4 3l12 2v13L4 16zM8 4v13M12 4v14M4 8l12 1M4 12l12 1" fill="none" stroke="#444"/></svg>
      <div class="ml-[9px] w-px h-[28px] bg-[#d8d8d8]"></div>
      <svg class="w-[20px] h-[20px] ml-[9px]" viewBox="0 0 20 20"><rect x="3" y="3" width="14" height="14" fill="#e8eef8" stroke="#88a"/><path d="M3 3h14v3H3z" fill="#3c67c0"/><circle cx="9" cy="11" r="4" fill="none" stroke="#444"/></svg>
      <svg class="w-[20px] h-[20px] ml-[5px]" viewBox="0 0 20 20"><rect x="3" y="3" width="14" height="14" fill="#eef0f4" stroke="#99a"/><path d="M9 8l5 4-3 5-3-3z" fill="#e8b860"/></svg>
      <svg class="w-[20px] h-[20px] ml-[5px]" viewBox="0 0 20 20"><path d="M4 8a7 7 0 0 1 12-1M16 12a7 7 0 0 1-12 1" fill="none" stroke="#445" stroke-width="1.500"/></svg>
      <svg class="w-[20px] h-[20px] ml-[6px]" viewBox="0 0 20 20"><path d="M3 14l11-8 2 3-10 8z" fill="#3c67c0"/><path d="M14 3l4 2-2 3z" fill="#e8a030"/></svg>
      <svg class="w-[20px] h-[20px] ml-[5px]" viewBox="0 0 20 20"><rect x="3" y="2" width="9" height="8" fill="none" stroke="#ccc"/><path d="M6 15l9-7 3 3-8 7z" fill="none" stroke="#ccc"/></svg>
      <svg class="w-[20px] h-[20px] ml-[15px]" viewBox="0 0 20 20"><rect x="2" y="2" width="16" height="16" fill="#e8d8e0" stroke="#557"/><path d="M2 2h16v4H2z" fill="#3c67c0"/><path d="M6 9h3M11 9h3M6 13h3M11 13h3" stroke="#c33"/></svg>
      <svg class="w-[10px] h-[10px] ml-[5px]"><use href="#tri"/></svg>
      <svg class="w-[20px] h-[20px] ml-[7px]" viewBox="0 0 20 20"><path d="M2 14l5-3 2-8 5 1 1 8 3 3-4 3H4z" fill="#8a8a8a"/></svg>
      <svg class="w-[10px] h-[10px] ml-[4px]"><use href="#tri"/></svg>
      <svg class="w-[20px] h-[20px] ml-[8px]" viewBox="0 0 20 20"><path d="M10 1l8 4v10l-8 4-8-4V5z" fill="#7f9ce0"/><path d="M2 5l8 4 8-4-8-4z" fill="#b8c8f0"/></svg>
      <svg class="w-[10px] h-[10px] ml-[5px]"><use href="#tri"/></svg>
      <svg class="w-[20px] h-[20px] ml-[5px]" viewBox="0 0 20 20"><path d="M8 3l10 7-10 7z" fill="#b8c8e8" stroke="#668"/><path d="M2 4l5 5-5 7z" fill="#c33"/><path d="M3 17h4" stroke="#2a9a3c" stroke-width="2"/></svg>
      <svg class="w-[10px] h-[10px] ml-[3px]"><use href="#tri"/></svg>
      <div class="ml-[6px] w-px h-[28px] bg-[#d8d8d8]"></div>
    </div>
    <svg class="ml-auto mr-[7px] mt-[12px] w-[10px] h-[10px]"><use href="#tri"/></svg>
  </div>

  <!-- workspace -->
  <div class="flex flex-1 min-h-0">
    <!-- resource bar -->
    <div class="w-[32px] shrink-0 bg-[#dcdcdc] border-r border-[#a9a9a9] flex flex-col items-center relative">
      <div class="h-[31px] flex items-center"><svg class="w-[16px] h-[16px] -ml-[1px]" viewBox="0 0 16 16"><circle cx="8" cy="8" r="4.500" fill="none" stroke="#333" stroke-width="2"/><path d="M8 1v3M8 12v3M1 8h3M12 8h3M3 3l2 2M11 11l2 2M13 3l-2 2M5 11l-2 2" stroke="#333" stroke-width="1.400"/></svg></div>
      <div class="h-[13px]"></div>
      <div class="h-[42px] flex items-center"><svg class="w-[24px] h-[28px] ml-[2px]" viewBox="0 0 24 28"><path d="M5 1l4 2 1 5 4 1v5l-4 2-4-2-4-2V5z" fill="#f1cf5a" stroke="#b89a30"/><path d="M15 18l6-2 2 3v5l-6 2-3-3z" fill="#f1cf5a" stroke="#b89a30"/><path d="M4 16v11M4 22h9M13 14h11" stroke="#222" stroke-width="1" fill="none"/></svg></div>
      <div class="h-[42px] flex items-center"><svg class="w-[24px] h-[26px] ml-[2px]" viewBox="0 0 24 26"><path d="M3 1l8 7-8 7zM21 1l-8 7 8 7z" fill="#1d2f9c"/><rect x="1" y="16" width="9" height="9" fill="#f2e24a" stroke="#333"/><path d="M12 25V13l11 12z" fill="#d02020"/></svg></div>
      <div class="absolute left-[2px] top-[127px] w-[30px] h-[46px] bg-white border-l border-y border-[#a9a9a9] flex items-center justify-center"><svg class="w-[24px] h-[28px]" viewBox="0 0 24 28"><ellipse cx="8" cy="3" rx="5" ry="2" fill="#ecc2d8" stroke="#a05080"/><rect x="3" y="3" width="10" height="7" fill="#ecc2d8" stroke="#a05080"/><path d="M5 14v13M5 20h6M5 14h17" fill="none" stroke="#333"/><circle cx="17" cy="21" r="4.500" fill="none" stroke="#a05080"/><circle cx="17" cy="21" r="1.500" fill="#a05080"/></svg></div>
      <div class="h-[44px]"></div>
      <div class="h-[42px] flex items-center"><svg class="w-[24px] h-[22px] ml-[2px]" viewBox="0 0 24 22"><path d="M1 6l5-2v17l-5 1z" fill="#e8a020"/><path d="M6 4l5-2v17l-5 2z" fill="#d03a2a"/><path d="M11 3l5-2v17l-5 2z" fill="#35a040"/><path d="M16 2l7-2v16l-7 2z" fill="#3a80d0"/></svg></div>
      <div class="h-[54px] flex items-center"><svg class="w-[26px] h-[26px] ml-[1px]" viewBox="0 0 26 26"><circle cx="9" cy="16" r="8" fill="#2c78d8"/><text x="9" y="21" text-anchor="middle" font-size="13" font-weight="700" fill="#fff" font-family="Liberation Serif">i</text><path d="M12 5a11 11 0 0 1 11 11M12 1a15 15 0 0 1 13 13" fill="none" stroke="#2c78d8" stroke-width="2.400"/></svg></div>
      <div class="h-[54px] flex items-center"><svg class="w-[20px] h-[24px] ml-[2px]" viewBox="0 0 20 24"><path d="M1 1h12l6 6v16H1z" fill="#eef4fa" stroke="#3c67c0"/><circle cx="10" cy="14" r="5" fill="#3c8a5a"/><path d="M10 9a5 5 0 0 1 4 7l-4-2z" fill="#3c67c0"/></svg></div>
      <div class="h-[53px] flex items-center"><svg class="w-[24px] h-[24px] ml-[2px]" viewBox="0 0 24 24"><circle cx="12" cy="12" r="10.500" fill="#eee" stroke="#666" stroke-width="2"/><path d="M12 5v7h6" fill="none" stroke="#222" stroke-width="1.500"/></svg></div>
      <div class="h-[43px] flex items-center"><svg class="w-[22px] h-[26px] ml-[2px]" viewBox="0 0 22 26"><defs><linearGradient id="rb" x1="0" y1="0" x2="0" y2="1"><stop offset="0" stop-color="#e02020"/><stop offset=".3" stop-color="#f0e020"/><stop offset=".6" stop-color="#20c040"/><stop offset="1" stop-color="#2040e0"/></linearGradient></defs><rect x="1" y="1" width="8" height="23" fill="url(#rb)"/><path d="M10 5l10 18" stroke="#222" stroke-width="2.500"/></svg></div>
      <div class="h-[42px] flex items-center"><svg class="w-[22px] h-[22px] ml-[2px]" viewBox="0 0 22 22"><path d="M2 4l8 4-2 6-6-4z" fill="#3c67c0"/><path d="M10 8l10-5-2 8z" fill="#ddd" stroke="#333" stroke-width=".6"/><path d="M2 20l8-9 8 9" fill="none" stroke="#111" stroke-width="2"/></svg></div>
      <div class="h-[42px] flex items-center"><svg class="w-[22px] h-[26px] ml-[2px]" viewBox="0 0 22 26"><path d="M9 4l10-2 2 5-8 1-6 12" fill="none" stroke="#666" stroke-width="2"/><ellipse cx="9" cy="19" rx="6" ry="5" fill="#9aa" stroke="#666"/><rect x="2" y="20" width="7" height="4" fill="#e8a020"/></svg></div>
    </div>

    <!-- part navigator -->
    <div class="w-[433px] shrink-0 bg-white border-r border-[#b5b5b5] flex flex-col pl-[6px] pr-[9px]">
      <div class="h-[36px] shrink-0 flex items-center justify-between pl-[4px] pr-[7px] pt-[4px] text-[18px]">
        <span>部件导航器</span>
        <div class="w-[16px] h-[15px] border border-[#111] border-t-[3px]"></div>
      </div>
      <div class="h-[408px] shrink-0 border border-[#d6d6d6] flex flex-col relative">
        <div class="h-[29px] bg-[#f0f0f0] border-b border-[#d6d6d6] grid grid-cols-[200px_100px_100px] text-[18px] leading-none">
          <div class="border-r border-[#d6d6d6] flex items-center pl-[6px] pt-[2px]">名称<svg class="ml-[19px] w-[14px] h-[10px]" viewBox="0 0 14 10"><path d="M7 1l6 7H1z" fill="#111"/></svg></div>
          <div class="border-r border-[#d6d6d6] flex items-center pl-[6px] pt-[2px]">最新</div>
          <div class="border-r border-[#d6d6d6] flex items-center pl-[6px] pt-[2px]">附注</div>
        </div>
        <div class="flex-1 flex min-h-0">
          <div class="w-[389px] flex flex-col text-[18px] leading-none relative">
            <div class="absolute left-[28px] top-0 h-[324px] border-l border-dotted border-[#777]"></div>
            <div class="h-[28px] shrink-0 bg-[#f7f7f7] border-b border-[#e8e8e8] grid grid-cols-[200px_100px_89px]"><div class="flex items-center pl-[40px] gap-[1px] border-r border-[#e2e2e2]"><svg class="w-[14px] h-[14px]"><use href="#box"/></svg><svg class="w-[15px] h-[15px]" viewBox="0 0 15 15"><path d="M2 1v12h12M2 13L12 3M5 6l8 5" fill="none" stroke="#345" stroke-width="1.100"/></svg><span class="ml-[3px]">基准坐标系 (0)</span></div><div class="flex items-center pl-[6px] border-r border-[#e2e2e2]"><svg class="w-[14px] h-[14px]"><use href="#chk"/></svg></div></div>
            <div class="h-[28px] shrink-0 bg-white border-b border-[#e8e8e8] grid grid-cols-[200px_100px_89px]"><div class="flex items-center pl-[40px] gap-[1px] border-r border-[#e2e2e2]"><svg class="w-[14px] h-[14px]"><use href="#box"/></svg><svg class="w-[15px] h-[15px]"><use href="#sk"/></svg><span class="ml-[3px] text-[#a8a8a8]">草图 (1) "SKE...</span></div><div class="flex items-center pl-[6px] border-r border-[#e2e2e2]"><svg class="w-[14px] h-[14px]"><use href="#chk"/></svg></div></div>
            <div class="h-[28px] shrink-0 bg-[#f7f7f7] border-b border-[#e8e8e8] grid grid-cols-[200px_100px_89px]"><div class="flex items-center pl-[40px] gap-[1px] border-r border-[#e2e2e2]"><svg class="w-[14px] h-[14px]"><use href="#box"/></svg><svg class="w-[15px] h-[15px]"><use href="#rev"/></svg><span class="ml-[3px]">旋转 (2)</span></div><div class="flex items-center pl-[6px] border-r border-[#e2e2e2]"><svg class="w-[14px] h-[14px]"><use href="#chk"/></svg></div></div>
            <div class="h-[28px] shrink-0 bg-white border-b border-[#e8e8e8] grid grid-cols-[200px_100px_89px]"><div class="flex items-center pl-[40px] gap-[1px] border-r border-[#e2e2e2]"><svg class="w-[14px] h-[14px]"><use href="#box"/></svg><svg class="w-[15px] h-[15px]"><use href="#sk"/></svg><span class="ml-[3px]">草图 (3) "SKE...</span></div><div class="flex items-center pl-[6px] border-r border-[#e2e2e2]"><svg class="w-[14px] h-[14px]"><use href="#chk"/></svg></div></div>
            <div class="h-[28px] shrink-0 bg-[#f7f7f7] border-b border-[#e8e8e8] grid grid-cols-[200px_100px_89px]"><div class="flex items-center pl-[40px] gap-[1px] border-r border-[#e2e2e2]"><svg class="w-[14px] h-[14px]"><use href="#box"/></svg><svg class="w-[15px] h-[15px]"><use href="#sk"/></svg><span class="ml-[3px]">草图 (4) "SKE...</span></div><div class="flex items-center pl-[6px] border-r border-[#e2e2e2]"><svg class="w-[14px] h-[14px]"><use href="#chk"/></svg></div></div>
            <div class="h-[28px] shrink-0 bg-white border-b border-[#e8e8e8] grid grid-cols-[200px_100px_89px]"><div class="flex items-center pl-[40px] gap-[1px] border-r border-[#e2e2e2]"><svg class="w-[14px] h-[14px]"><use href="#box"/></svg><svg class="w-[15px] h-[15px]" viewBox="0 0 15 15"><path d="M1 10c3-8 5-6 7-3s4 3 6-2" fill="none" stroke="#8a2020" stroke-width="1.300"/></svg><span class="ml-[3px] text-[#a8a8a8]">样条 (5)</span></div><div class="flex items-center pl-[6px] border-r border-[#e2e2e2]"><svg class="w-[14px] h-[14px]"><use href="#chk"/></svg></div></div>
            <div class="h-[28px] shrink-0 bg-[#f7f7f7] border-b border-[#e8e8e8] grid grid-cols-[200px_100px_89px]"><div class="flex items-center pl-[38px] gap-[1px] border-r border-[#e2e2e2]"><svg class="w-[16px] h-[16px]"><use href="#boxi"/></svg><svg class="w-[15px] h-[15px]" viewBox="0 0 15 15"><path d="M1 3h13v9H1z" fill="#eda53c" stroke="#8a3a2a"/><path d="M5 3v9M10 3v9" stroke="#8a3a2a"/></svg><span class="ml-[3px]">拉伸 (6)</span></div><div class="flex items-center pl-[6px] border-r border-[#e2e2e2]"><svg class="w-[14px] h-[14px]"><use href="#chk"/></svg></div></div>
            <div class="h-[28px] shrink-0 bg-white border-b border-[#e8e8e8] grid grid-cols-[200px_100px_89px]"><div class="flex items-center pl-[38px] gap-[1px] border-r border-[#e2e2e2] relative"><div class="absolute left-[23px] top-[8px] w-[11px] h-[11px] bg-white border border-[#cfcfcf] flex items-center justify-center text-[11px] leading-none">+</div><svg class="w-[16px] h-[16px]"><use href="#boxi"/></svg><svg class="w-[15px] h-[15px]" viewBox="0 0 15 15"><path d="M1 9l6-4 7 4-7 5z" fill="#6d9bd8"/><path d="M4 7l3-5 3 5-3 2z" fill="#e98a15"/></svg><span class="ml-[3px]">阵列特征 [圆...</span></div><div class="flex items-center pl-[6px] border-r border-[#e2e2e2]"><svg class="w-[14px] h-[14px]"><use href="#chk"/></svg></div></div>
            <div class="h-[28px] shrink-0 bg-[#f7f7f7] border-b border-[#e8e8e8] grid grid-cols-[200px_100px_89px]"><div class="flex items-center pl-[40px] gap-[1px] border-r border-[#e2e2e2]"><svg class="w-[14px] h-[14px]"><use href="#box"/></svg><svg class="w-[15px] h-[15px]"><use href="#sk"/></svg><span class="ml-[3px] text-[#a8a8a8]">草图 (8) "SKE...</span></div><div class="flex items-center pl-[6px] border-r border-[#e2e2e2]"><svg class="w-[14px] h-[14px]"><use href="#chk"/></svg></div></div>
            <div class="h-[28px] shrink-0 bg-white border-b border-[#e8e8e8] grid grid-cols-[200px_100px_89px]"><div class="flex items-center pl-[40px] gap-[1px] border-r border-[#e2e2e2]"><svg class="w-[14px] h-[14px]"><use href="#box"/></svg><svg class="w-[15px] h-[15px]"><use href="#uni"/></svg><span class="ml-[3px]">合并 (9)</span></div><div class="flex items-center pl-[6px] border-r border-[#e2e2e2]"><svg class="w-[14px] h-[14px]"><use href="#chk"/></svg></div></div>
            <div class="h-[28px] shrink-0 bg-[#f7f7f7] border-b border-[#e8e8e8] grid grid-cols-[200px_100px_89px]"><div class="flex items-center pl-[40px] gap-[1px] border-r border-[#e2e2e2]"><svg class="w-[14px] h-[14px]"><use href="#box"/></svg><svg class="w-[15px] h-[15px]"><use href="#rev"/></svg><span class="ml-[3px]">旋转 (10)</span></div><div class="flex items-center pl-[6px] border-r border-[#e2e2e2]"><svg class="w-[14px] h-[14px]"><use href="#chk"/></svg></div></div>
            <div class="h-[28px] shrink-0 bg-white border-b border-[#e8e8e8] grid grid-cols-[200px_100px_89px]"><div class="flex items-center pl-[40px] gap-[1px] border-r border-[#e2e2e2]"><svg class="w-[14px] h-[14px]"><use href="#box"/></svg><svg class="w-[15px] h-[15px]"><use href="#uni"/></svg><span class="ml-[3px] font-bold">合并 (11)</span></div><div class="flex items-center pl-[6px] border-r border-[#e2e2e2]"><svg class="w-[14px] h-[14px]"><use href="#chk"/></svg></div></div>
            <div class="flex-1 grid grid-cols-[200px_100px_89px]"><div class="border-r border-[#e2e2e2]"></div><div class="border-r border-[#e2e2e2]"></div></div>
          </div>
          <!-- vertical scrollbar -->
          <div class="flex-1 bg-[#f0f0f0] flex flex-col items-center relative">
            <svg class="mt-[9px] w-[14px] h-[10px]" viewBox="0 0 14 10"><path d="M2 8l5-5 5 5" fill="none" stroke="#555" stroke-width="2"/></svg>
            <div class="mt-[66px] w-[24px] h-[237px] bg-[#c4c4c4]"></div>
            <svg class="mt-[7px] w-[14px] h-[10px]" viewBox="0 0 14 10"><path d="M2 2l5 5 5-5" fill="none" stroke="#555" stroke-width="2"/></svg>
          </div>
        </div>
        <!-- horizontal scrollbar -->
        <div class="h-[28px] shrink-0 bg-[#f0f0f0] flex items-center">
          <svg class="ml-[6px] w-[10px] h-[14px]" viewBox="0 0 10 14"><path d="M8 2L3 7l5 5" fill="none" stroke="#555" stroke-width="2"/></svg>
          <div class="ml-[10px] w-[323px] h-[28px] bg-[#c4c4c4]"></div>
          <svg class="ml-[20px] w-[10px] h-[14px]" viewBox="0 0 10 14"><path d="M2 2l5 5-5 5" fill="none" stroke="#555" stroke-width="2"/></svg>
        </div>
      </div>
      <div class="h-[37px] shrink-0 border-t-[4px] border-b-[3px] border-[#c9c9c9] flex items-center justify-between pl-[7px] pr-[4px] text-[22px] leading-none text-[#21677f]"><span>相关性</span><svg class="w-[20px] h-[15px] -mt-[3px]" viewBox="0 0 20 15"><path d="M2 2l8 10 8-10" fill="none" stroke="#0f5b75" stroke-width="3"/></svg></div>
      <div class="h-[32px] shrink-0 border-b-[3px] border-[#d4d4d4] flex items-center justify-between pl-[7px] pr-[4px] text-[22px] leading-none text-[#21677f]"><span>细节</span><svg class="w-[20px] h-[15px] -mt-[3px]" viewBox="0 0 20 15"><path d="M2 2l8 10 8-10" fill="none" stroke="#0f5b75" stroke-width="3"/></svg></div>
      <div class="h-[248px] shrink-0 border border-[#d6d6d6] flex flex-col">
        <div class="h-[35px] shrink-0 flex items-center justify-between pl-[6px] pr-[3px] pb-[4px] text-[22px] leading-none text-[#21677f]"><span>预览</span><svg class="w-[20px] h-[15px]" viewBox="0 0 20 15"><path d="M2 13l8-10 8 10" fill="none" stroke="#0f5b75" stroke-width="3"/></svg></div>
        <div class="ml-[84px] w-[248px] h-[185px] border border-[#d6d6d6] flex items-center justify-center pb-[2px] pr-[3px] text-[18px] leading-none">没有可用的预览</div>
      </div>
    </div>

    <!-- graphics window -->
    <div class="flex-1 min-w-0 flex flex-col border-l border-dashed border-[#9a9a9a]">
      <div class="h-[31px] shrink-0 bg-white border-b border-[#5a9fb8] flex items-end">
        <div class="w-[124px] h-[28px] bg-[#5fa6bf] text-white text-[18px] leading-none flex items-center">
          <svg class="ml-[4px] w-[16px] h-[16px]" viewBox="0 0 16 16"><circle cx="8" cy="9" r="6" fill="#e8eef8"/><path d="M2 9a6 6 0 0 1 12 0z" fill="#2f5fb8"/><path d="M8 3l4-2v5z" fill="#e8a030"/></svg>
          <span class="ml-[5px]">yelun.prt</span>
          <svg class="ml-[8px] w-[9px] h-[9px]" viewBox="0 0 9 9"><path d="M1 1l7 7M8 1L1 8" stroke="#fff" stroke-width="1.500"/></svg>
        </div>
      </div>
      <div class="flex-1 min-h-0 relative overflow-hidden bg-gradient-to-b from-[#bfc3c5] via-[#d5d8da] to-[#e8eaec]">
        <svg class="absolute inset-0 w-full h-full" viewBox="466 255 1453 737">
          <defs>
            <linearGradient id="gB" gradientUnits="userSpaceOnUse" x1="0" y1="600" x2="0" y2="830"><stop offset="0" stop-color="#ff9c00"/><stop offset=".45" stop-color="#ffba00"/><stop offset=".72" stop-color="#ffd41a"/><stop offset="1" stop-color="#ffc800"/></linearGradient>
            <linearGradient id="gC" gradientUnits="userSpaceOnUse" x1="0" y1="580" x2="0" y2="870"><stop offset="0" stop-color="#ff9c00"/><stop offset=".35" stop-color="#ffb800"/><stop offset=".66" stop-color="#ffee2c"/><stop offset="1" stop-color="#ffcc00"/></linearGradient>
            <linearGradient id="gD" gradientUnits="userSpaceOnUse" x1="0" y1="520" x2="0" y2="890"><stop offset="0" stop-color="#ff9a00"/><stop offset=".4" stop-color="#ffa800"/><stop offset=".68" stop-color="#ffd81a"/><stop offset="1" stop-color="#ffc800"/></linearGradient>
            <linearGradient id="gE" gradientUnits="userSpaceOnUse" x1="0" y1="520" x2="0" y2="900"><stop offset="0" stop-color="#ff9c00"/><stop offset=".5" stop-color="#ff9a00"/><stop offset=".8" stop-color="#ffb400"/><stop offset="1" stop-color="#ffc400"/></linearGradient>
            <linearGradient id="gF" gradientUnits="userSpaceOnUse" x1="0" y1="540" x2="0" y2="890"><stop offset="0" stop-color="#ff9c00"/><stop offset=".55" stop-color="#ffa000"/><stop offset="1" stop-color="#ffbc00"/></linearGradient>
            <radialGradient id="gY" gradientUnits="userSpaceOnUse" cx="1243" cy="755" r="75"><stop offset="0" stop-color="#fff030"/><stop offset=".55" stop-color="#ffd414"/><stop offset="1" stop-color="#ffc000"/></radialGradient>
            <linearGradient id="rimg" x1="0" y1="0" x2="1" y2="0"><stop offset="0" stop-color="#e89c00"/><stop offset=".5" stop-color="#c27800"/><stop offset="1" stop-color="#d48a00"/></linearGradient>
            <linearGradient id="dk1" gradientUnits="userSpaceOnUse" x1="1200" y1="540" x2="1400" y2="790"><stop offset="0" stop-color="#a06c00"/><stop offset=".5" stop-color="#8a5a00"/><stop offset="1" stop-color="#6a4300"/></linearGradient>
            <linearGradient id="dk2" gradientUnits="userSpaceOnUse" x1="1240" y1="530" x2="1430" y2="770"><stop offset="0" stop-color="#976400"/><stop offset=".45" stop-color="#8a5a00"/><stop offset="1" stop-color="#6a4300"/></linearGradient>
            <linearGradient id="dk3" gradientUnits="userSpaceOnUse" x1="1270" y1="520" x2="1440" y2="740"><stop offset="0" stop-color="#8c5c00"/><stop offset=".4" stop-color="#7c5200"/><stop offset="1" stop-color="#6a4300"/></linearGradient>
            <linearGradient id="dk4" gradientUnits="userSpaceOnUse" x1="1300" y1="510" x2="1420" y2="690"><stop offset="0" stop-color="#7d5200"/><stop offset="1" stop-color="#6a4300"/></linearGradient>
            <linearGradient id="hb" x1="0" y1="0" x2="1" y2="0"><stop offset="0" stop-color="#f0a000"/><stop offset=".6" stop-color="#e09400"/><stop offset="1" stop-color="#e09400"/></linearGradient>
            <linearGradient id="pin" x1="0" y1="0" x2="1" y2="0"><stop offset="0" stop-color="#e89c00"/><stop offset=".5" stop-color="#c98500"/><stop offset="1" stop-color="#e09800"/></linearGradient>
          </defs>

          <!-- stray sketch curves -->
          <g fill="none" stroke="#8d8d8d" stroke-width=".8" stroke-dasharray="1 4">
            <path d="M879 523l-1 10-4 10-12 25-7 21M848 540v15l-2 16-17 32-7 18M912 555l-4 10-3 10-17 43M880 587v16l-18 29-7 21"/>
            <path d="M829 452h92M978 464l94 4M983 450l-7 25M947 482l-2 25M1013 482l-4 25M1009 495l33 1M928 436l19 12M895 407l33 18M985 436l57-4M983 514l-5 27"/>
            <path d="M1572 885l8 14-6 24 8 20-4 22-6 25M1612 898l-12 14-6 24-10 24 6 30M1645 905l-8 16-4 22 8 22 4 25"/>
            <path d="M950 918l50 4M1000 930l60 4M1060 922l57 15M955 935l25 4"/>
          </g>

          <g stroke="#2f2000" stroke-width="1" stroke-linejoin="round">
            <!-- base disc -->
            <path d="M857 785v20c0 69 150 125 335.500 125S1528 874 1528 805v-20z" fill="url(#rimg)"/>
            <ellipse cx="1192.500" cy="785" rx="335.500" ry="125" fill="#ffc000"/>
            <path d="M1007 863l33 9M1103 883c18 3 36 4 54 4M1210 888l65-3 40-8 88-25c22-10 42-21 54-35 15-12 20-25 15-32s-14-30-20-40" fill="none" stroke-width=".8"/>

            <!-- rear fan -->
            <path d="M1245 452l7 1-4 14-4-5z" fill="#ffc000"/>
            <path d="M1248 491l38-30 3 3-4 17-27 18z" fill="#b87a00"/>
            <path d="M1248 491l38-30 3 3-41 31z" fill="#ffc000"/>
            <path d="M1245 498l65-22 1 5v18l-45 6z" fill="#a86f00"/>
            <path d="M1245 498l65-22 1 5-62 20z" fill="#ffc000"/>
            <path d="M1110 457l27 5v12l-29-2z" fill="#e89000"/>
            <path d="M1081 471l56 2v10l-57 7z" fill="#f89c00"/>
          </g>

          <!-- blades are filled in by the script below -->
          <g id="blades" stroke="#2f2000" stroke-width="1" stroke-linejoin="round"></g>

          <g stroke="#2f2000" stroke-width="1" stroke-linejoin="round">
            <!-- hub -->
            <path d="M1137 462v38c0 18 30 16 56 16s55 0 55-18v-36z" fill="url(#hb)"/>
            <ellipse cx="1192.700" cy="462" rx="55.600" ry="21.600" fill="#ffc000"/>
            <path d="M1159 442v21c0 7 15 12 33.700 12s33.300-5 33.300-12v-21z" fill="url(#pin)"/>
            <ellipse cx="1192.700" cy="442" rx="33.500" ry="12.500" fill="#ffc000"/>
          </g>

          <!-- wcs triad on the part -->
          <g fill="none" stroke="#f5ecc8" stroke-width="1.200" opacity=".7">
            <path d="M1193 743l50-16v60l-50 18zM1193 743l42 22v58l-42-18M1235 823l50-16-42-20M1235 797l48-22M1193 805V690M1235 823l32 17"/>
          </g>
          <path d="M1193 698l-3-10 3-6 3 6zM1267 838l8 6-10-1zM1283 773l-8 4 10 3z" fill="#d8d8d8"/>
          <g font-family="Liberation Sans" font-size="13" fill="#f5f0dc" opacity=".85"><text x="1188" y="680">Z</text><text x="1276" y="851">X</text><text x="1297" y="776">Y</text></g>

          <!-- view triad -->
          <path d="M526 912l16-10 18 6v22l-16 5-18-7z" fill="#c8cccc" fill-opacity=".55" stroke="#b5b5b5"/>
          <path d="M526 912l18 6 16-10M544 918v17" fill="none" stroke="#bbb"/>
          <path d="M525 928V898" stroke="#1f3fb0" stroke-width="2"/><path d="M525 893l-3 9h6z" fill="#1f3fb0"/>
          <path d="M525 928l31-8" stroke="#9cc09c" stroke-width="2"/>
          <path d="M525 928l25 13" stroke="#b83030" stroke-width="2.500"/>
          <circle cx="525" cy="928" r="3.500" fill="#ddd" stroke="#888"/>
          <g font-family="Liberation Sans" font-size="11"><text x="521" y="891" fill="#3a50d0">Z</text><text x="558" y="922" fill="#6fa060">Y</text><text x="551" y="947" fill="#c03030">X</text></g>
        </svg>
      </div>
    </div>
  </div>

  <!-- status bar -->
  <div class="h-[28px] shrink-0 bg-white border-t border-[#a3a3a3]"></div>

  <!-- taskbar -->
  <div class="h-[60px] shrink-0 bg-[#e1d5d1] flex items-center relative">
    <svg class="ml-[24px] w-[24px] h-[24px]" viewBox="0 0 24 24"><path d="M0 3.500l10-1.500v9.500H0zM11 2l13-2v11.500H11zM0 12.500h10V22L0 20.500zM11 12.500h13V24l-13-2z" fill="#000"/></svg>
    <svg class="ml-[48px] w-[24px] h-[28px]" viewBox="0 0 24 28"><circle cx="15" cy="10" r="8.500" fill="none" stroke="#111" stroke-width="1.200"/><path d="M9 16L1 27" stroke="#111" stroke-width="1.200"/></svg>
    <svg class="ml-[48px] w-[24px] h-[28px]" viewBox="0 0 24 28"><path d="M1 1h16M1 27h16M1 5h16M1 23h16" stroke="#111"/><rect x="1" y="8" width="16" height="12" fill="none" stroke="#111"/><path d="M23 2v24" stroke="#111"/><rect x="20.500" y="11" width="4" height="4" fill="#111"/></svg>
    <div class="ml-[33px] w-[6px] h-[36px] border-x border-[#111]"></div>
    <svg class="ml-[35px] w-[34px] h-[32px]" viewBox="0 0 34 32"><path d="M1 4a2 2 0 0 1 2-2h10l3 4H1z" fill="#d8a520"/><rect x="1" y="6" width="33" height="22" rx="2" fill="#f9d66e"/><path d="M11 30V20h14v10h-5v-5h-4v5z" fill="#3f8fd0"/></svg>
    <svg class="ml-[40px] w-[36px] h-[42px]" viewBox="0 0 36 42"><ellipse cx="18" cy="21" rx="18" ry="21" fill="#f7d90f"/><path d="M18 6c1 5 6 8 12 8-5 1-8 0-10-2v17a7 7 0 1 1-4-6V6z" fill="#1fb57b"/></svg>
    <svg class="ml-[40px] w-[36px] h-[36px]" viewBox="0 0 36 36"><rect width="36" height="36" rx="5" fill="#dd0a20"/><circle cx="18" cy="20" r="10" fill="none" stroke="#fff" stroke-width="3"/><path d="M20 6c-6 1-8 8-5 13 3 4 8 2 7-2-1-3-3-6-1-9 1-2 5-1 6 1" fill="none" stroke="#fff" stroke-width="2.500"/></svg>
    <svg class="ml-[38px] w-[38px] h-[38px]" viewBox="0 0 38 38"><circle cx="19" cy="19" r="19" fill="#1a7dc6"/><path d="M1 18C4 3 30-3 37 17c1 8-9 10-14 7 3-8-4-11-10-8-6 4-7 14-2 20C5 33 0 26 1 18z" fill="#3fcb8f"/><path d="M1 18c3-9 18-10 22-2-6-2-12 2-11 8 0 5 6 11 14 10-12 6-26-3-25-16z" fill="#0f5f9f"/></svg>
    <svg class="ml-[37px] w-[36px] h-[40px]" viewBox="0 0 36 40"><circle cx="19" cy="22" r="15" fill="#2f8fe0"/><path d="M8 13a15 15 0 0 1 22 0l-10 5z" fill="#8fe0b0"/><path d="M4 0h16l-8 17z" fill="#d52b4a"/><path d="M2 38c14 2 30-8 33-24-2 12-16 22-26 21z" fill="#f0a020"/></svg>
    <div class="ml-[22px] w-[73px] h-[60px] bg-[#f2ecea] flex items-center justify-center border-b-[3px] border-[#1e78c8]"><svg class="w-[32px] h-[36px]" viewBox="0 0 32 36"><path d="M8 6c6-6 20-3 21 7 0 7-7 10-15 10" fill="none" stroke="#c8481e" stroke-width="3.500"/><path d="M8 6c-3 5-3 10 0 15" fill="none" stroke="#c8481e" stroke-width="2"/><path d="M16 1l2 20-4 5-3-4zM20 3l2 8-4 14-3-1z" fill="#a8a8a8"/><circle cx="9" cy="29" r="4.500" fill="#fff" stroke="#1f78c8" stroke-width="3"/><circle cx="22" cy="30" r="4.500" fill="#fff" stroke="#1f78c8" stroke-width="3"/></svg></div>
    <div class="absolute left-[554px] bottom-0 w-[61px] h-[3px] bg-[#1e78c8]"></div>

    <!-- tray -->
    <div class="absolute left-[1479px] top-[13px] h-[33px] w-[64px] bg-white border border-[#9a9a9a] rounded-[2px] p-[3px] flex text-white text-[20px] leading-none"><div class="w-[26px] bg-[#25a050]"></div><div class="w-[30px] bg-[#a09c9c]"></div><span class="absolute left-[11px] top-[5px]">48%</span></div>
    <div class="absolute left-[1543px] top-[24px] w-[3px] h-[12px] bg-white border border-[#aaa]"></div>
    <svg class="absolute left-[1557px] top-[30px] w-[18px] h-[11px]" viewBox="0 0 18 11"><path d="M1 10l8-8 8 8" fill="none" stroke="#111" stroke-width="1.100"/></svg>
    <svg class="absolute left-[1591px] top-[31px] w-[23px] h-[13px]" viewBox="0 0 23 13"><rect x=".5" y=".5" width="20" height="12" fill="none" stroke="#111"/><rect x="2" y="2" width="9" height="9" fill="#000"/><rect x="21" y="4" width="2" height="5" fill="#111"/></svg>
    <svg class="absolute left-[1630px] top-[22px] w-[20px] h-[20px]" viewBox="0 0 20 20"><path d="M1 19A18 18 0 0 1 19 1M5 19A14 14 0 0 1 19 5M9 19a10 10 0 0 1 10-10" fill="none" stroke="#333" stroke-width=".9"/><circle cx="17" cy="17" r="1.800" fill="#111"/></svg>
    <svg class="absolute left-[1663px] top-[22px] w-[22px] h-[22px]" viewBox="0 0 22 22"><path d="M1 7h5l6-6v20l-6-6H1z" fill="none" stroke="#222"/><path d="M15 8a4 4 0 0 1 0 6M18 5a8 8 0 0 1 0 12" fill="none" stroke="#444"/></svg>
    <span class="absolute left-[1696px] top-[19px] text-[23px] leading-none">英</span>
    <span class="absolute left-[1760px] top-[6px] text-[18px] leading-[22px]">18:33</span>
    <span class="absolute left-[1741px] top-[32px] text-[18px] leading-[24px]">2021/4/5</span>
    <svg class="absolute left-[1858px] top-[18px] w-[24px] h-[24px]" viewBox="0 0 24 24"><path d="M.5 1h23v17H15l-3 4-3-4H.5z" fill="none" stroke="#111"/></svg>
    <div class="absolute left-[1913px] top-0 w-px h-[60px] bg-[#8a8a8a]"></div>
  </div>

  <!-- status icons + watermark lie over the bars -->
  <svg class="absolute left-[1829px] top-[998px] w-[16px] h-[16px]" viewBox="0 0 16 16"><rect width="16" height="16" fill="#dcdcdc"/><path d="M2 12l4-7 3 3 4-4" fill="none" stroke="#999"/></svg>
  <svg class="absolute left-[1849px] top-[998px] w-[16px] h-[16px]" viewBox="0 0 16 16"><path d="M1 4V1h3M12 1h3v3M15 12v3h-3M4 15H1v-3" fill="none" stroke="#888"/><rect x="4" y="4" width="8" height="8" fill="#5d7cc0"/></svg>
  <svg class="absolute left-[1637px] top-[985px] w-[72px] h-[82px]" viewBox="0 0 72 82">
    <path d="M36 0l36 20v42L36 82 0 62V20z" fill="#5ab8ec" fill-opacity=".55"/>
    <path d="M36 22l19 11v22L36 66 17 55V33z" fill="#3a98d0" fill-opacity=".6" stroke="#fff" stroke-opacity=".7"/>
    <path d="M17 33l19 11 19-11-19-11z" fill="#cfe8f6" fill-opacity=".8"/>
    <path d="M36 44v22" stroke="#fff" stroke-opacity=".7"/>
    <path d="M36 0C68 8 68 50 50 62M0 50C4 20 30 8 50 20" fill="none" stroke="#fff" stroke-opacity=".55" stroke-width="2"/>
  </svg>
  <span class="absolute left-[1716px] top-[1003px] text-[40px] leading-none font-bold text-white/40 whitespace-nowrap">3D世界网</span>
  <span class="absolute left-[1716px] top-[1042px] text-[13px] leading-none text-white/50 tracking-[3.500px] whitespace-nowrap font-['Liberation_Sans',sans-serif]">WWW.3DSJW.COM</span>
</div>

<script>
  // impeller blades: each edge is a list of points, smoothed into one curve
  (function () {
    const blades = document.getElementById('blades');

    function curve(pts, first) {
      let d = (first ? 'M' : 'L') + pts[0];
      for (let i = 0; i < pts.length - 1; i++) {
        const p0 = pts[i - 1] || pts[i], p1 = pts[i], p2 = pts[i + 1], p3 = pts[i + 2] || p2;
        const c1 = [p1[0] + (p2[0] - p0[0]) / 6, p1[1] + (p2[1] - p0[1]) / 6];
        const c2 = [p2[0] - (p3[0] - p1[0]) / 6, p2[1] - (p3[1] - p1[1]) / 6];
        d += 'C' + c1 + ' ' + c2 + ' ' + p2;
      }
      return d;
    }

    function shape(fill, stroked, ...segs) {
      const el = document.createElementNS('http://www.w3.org/2000/svg', 'path');
      el.setAttribute('d', segs.map((s, i) => curve(s, i === 0)).join('') + 'Z');
      el.setAttribute('fill', fill);
      el.setAttribute('stroke', stroked ? '#2f2000' : 'none');
      blades.appendChild(el);
    }

    const r = (a) => [...a].reverse();

    const edge = [[903,719],[930,707],[977,680],[1023,643],[1045,610]];
    const crest = [[1045,610],[1065,560],[1070,488]];
    const b0 = [[902,760],[950,727],[995,680],[1030,625],[1052,585]];
    const b1 = [[905,765],[953,731],[999,684],[1034,628],[1054,588]];
    const c3L = [[940,800],[967,773],[997,730],[1025,680],[1048,625],[1060,577]];
    const c3R = [[945,803],[971,776],[1001,733],[1030,682],[1052,627],[1062,580]];
    const c4L = [[1017,830],[1037,793],[1053,737],[1063,680],[1070,625],[1078,565],[1075,507]];
    const c4R = [[1024,831],[1044,795],[1060,738],[1070,682],[1077,627],[1085,565],[1080,505]];
    const c5L = [[1119,850],[1112,790],[1110,740],[1110,680],[1108,645],[1107,573],[1097,522]];
    const c5R = [[1128,852],[1120,790],[1117,740],[1117,680],[1115,645],[1113,573],[1101,523]];
    const c6L = [[1233,852],[1217,827],[1193,743],[1167,680],[1158,645],[1147,587],[1133,533]];
    const c6R = [[1243,850],[1226,823],[1203,743],[1174,680],[1165,645],[1153,593],[1138,533]];
    const fR = [[1148,517],[1172,597],[1197,645],[1215,700],[1243,745],[1267,790],[1300,830],[1315,867],[1310,896]];
    const c7L = [[1342,837],[1283,773],[1250,733],[1213,640],[1195,597],[1180,538]];
    const c7R = [[1345,835],[1300,775],[1258,725],[1220,645],[1203,607],[1185,538]];
    const dkL = [[1220,640],[1250,713],[1333,773],[1427,810]];
    const d2L = [[1227,537],[1240,587],[1265,640],[1300,703],[1357,753],[1430,808]];
    const d2R = [[1232,537],[1247,590],[1272,640],[1307,700],[1362,750],[1436,805]];
    const d3L = [[1271,528],[1287,593],[1313,640],[1357,707],[1430,743],[1480,768]];
    const d3R = [[1277,530],[1293,593],[1320,640],[1362,703],[1432,740],[1484,765]];
    const d4L = [[1302,515],[1310,553],[1330,600],[1350,640],[1400,690],[1483,723]];
    const d4R = [[1305,515],[1314,553],[1334,598],[1353,637],[1402,686],[1484,720]];
    const sil = [[1315,495],[1316,530],[1327,577],[1347,627],[1365,640],[1400,672],[1445,687]];

    // cone behind the blades
    shape('#ff9c00', false, edge, crest, [[1137,481],[1250,500],[1200,700],[1100,800],[950,800]]);
    shape('none', true, edge, crest, r(crest), r(edge));

    // left faces
    shape('url(#gB)', true, edge, r(b0), [[898,787],[873,782]]);
    shape('url(#gB)', true, b1, r(c3L), [[948,835],[943,830],[894,828]]);
    shape('#ef9a00', true, b0, r(b1));
    shape('url(#gC)', true, c3R, [[1070,540]], r(c4L), [[1030,858],[1007,863],[962,867]]);
    shape('#f5a500', true, c3L, r(c3R));
    shape('#b87800', true, [[940,800],[943,804],[963,867],[960,867]]);
    shape('url(#gD)', true, c4R, [[1136,492],[1137,500]], r(c5L), [[1133,867],[1100,884],[1063,893]]);
    shape('#ffbe0c', true, c4L, r(c4R));
    shape('#b87800', true, [[1017,832],[1024,831],[1066,892],[1063,894]]);
    shape('url(#gE)', true, c5R, [[1137,499],[1140,503]], [[1133,533],[1147,587],[1158,645],[1167,680],[1193,743],[1203,780]], [[1203,780],[1217,817],[1225,853],[1213,887],[1186,904]]);
    shape('#ffc814', true, c5L, r(c5R));
    shape('#b87800', true, [[1119,850],[1130,853],[1186,904],[1175,902]]);
    shape('url(#gF)', true, c6R, fR);
    shape('#ffca14', true, c6L, r(c6R));
    shape('#c98300', true, [[1233,852],[1243,851],[1310,896],[1297,895]]);
    shape('url(#gY)', false, fR, c7L);
    shape('#9a6600', true, [[1155,510],[1180,538],[1195,597],[1213,640],[1243,720]], [[1243,720],[1200,667],[1172,590],[1155,510]]);
    shape('#f09c00', true, [[1172,597],[1182,597],[1205,645],[1215,690]], [[1215,700],[1197,645]]);
    shape('none', true, fR, r(fR));

    // yellow area and tip on the right of the last front strip
    shape('#ffc000', false, c7R.slice(2), dkL, [[1345,835]]);
    shape('#ffa800', true, [[1342,837],[1413,870]], [[1413,870],[1380,827],[1327,787],[1273,750]], [[1273,750],[1300,775],[1342,837]]);
    shape('#c98300', true, [[1342,837],[1355,838],[1413,870],[1403,872]]);
    shape('#ffcf18', true, c7L, r(c7R));

    // dark pressure faces
    shape('url(#dk4)', true, [[1235,507]], sil, [[1430,703]], r(d4R));
    shape('url(#dk3)', true, [[1217,510]], d4L, [[1490,745],[1430,743]], r(d3R));
    shape('url(#dk2)', true, [[1197,514]], d3L, [[1507,791],[1433,780],[1362,750]], r(d2R).slice(1));
    shape('url(#dk1)', true, [[1190,514]], d2L, r(dkL), [[1203,607],[1185,538]]);

    // light strips on the dark blades
    shape('#ffb000', true, d4L, r(d4R));
    shape('#ffb400', true, d3L, r(d3R));
    shape('#ffc000', true, d2L, r(d2R));
    shape('#ffc000', true, [[1217,510],[1302,513],[1303,516],[1218,513]]);
    shape('#ffc000', true, [[1197,514],[1272,527],[1273,529],[1197,517]]);
    shape('#ffc000', true, [[1175,513],[1230,536],[1227,537],[1177,515]]);
    shape('#ffc000', true, [[1155,509],[1160,508],[1184,537],[1180,539]]);
    shape('#ffc000', true, [[1235,507],[1315,495],[1316,500],[1238,510]]);
    shape('#c98300', true, [[1430,808],[1485,832],[1477,835],[1435,812]]);
    shape('#c98300', true, [[1480,768],[1513,786],[1507,791],[1484,778]]);
    shape('#c98300', true, [[1483,723],[1490,745],[1487,735]]);
    shape('#ffc000', true, [[1400,672],[1445,687],[1444,690],[1402,675]]);

    // tops of the front strips, up against the hub
    shape('#d88700', true, [[1075,507],[1136,488],[1137,492],[1080,505]]);
    shape('#d88700', true, [[1097,522],[1137,495],[1138,499],[1101,523]]);
    shape('#ffc000', true, [[1133,533],[1140,503],[1146,503],[1138,533]]);
  })();
</script>
</body>
</html>
